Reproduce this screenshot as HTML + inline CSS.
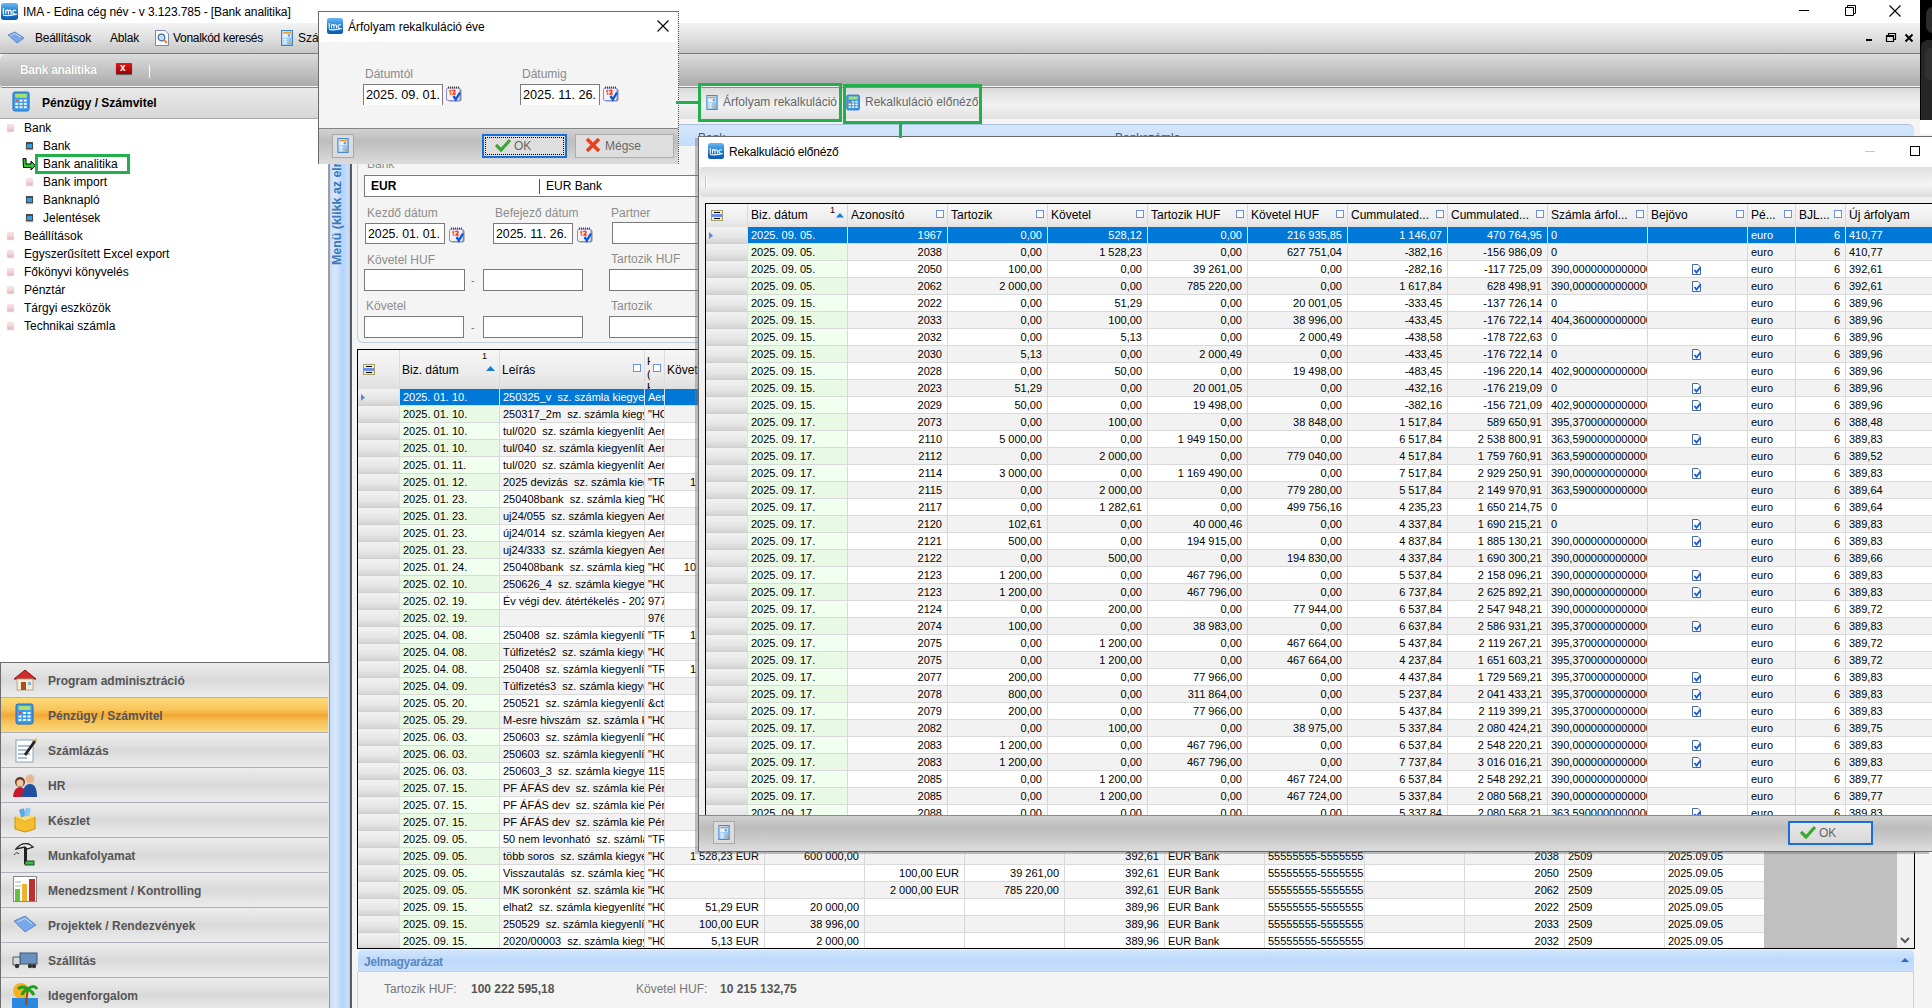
<!DOCTYPE html><html><head><meta charset="utf-8"><title>IMA</title><style>
*{box-sizing:border-box}
html,body{margin:0;padding:0}
body{width:1932px;height:1008px;overflow:hidden;position:relative;font-family:"Liberation Sans",sans-serif;font-size:11px;color:#000;background:#f4f4f4}
.a{position:absolute}
.t{position:absolute;white-space:nowrap;line-height:1}
.ico{position:absolute}
.gr{position:absolute;overflow:hidden}
.row{position:absolute;left:0;height:17px;white-space:nowrap}
.c{position:absolute;top:0;height:17px;line-height:17px;overflow:hidden;white-space:pre;border-right:1px solid #d9d9d9;border-bottom:1px solid #d9d9d9;padding:0 3px}
.c.r{text-align:right;padding-right:5px}
.ind{background:linear-gradient(#f2f2f2,#e6e6e6 60%,#d4d4d4);border-right:1px solid #e0e0e0;border-bottom:1px solid #cfcfcf}
.odd{background:#fff}
.even{background:#f2f2f2}
.gc.odd{background:#f0fff0}
.gc.even{background:#e8fae4}
.c.sel{background:#0078d7;color:#fff;border-right-color:#d4e4f4;border-bottom-color:#d9d9d9}
.hd{position:absolute;top:0;height:22px;line-height:22px;white-space:nowrap;overflow:hidden;padding:0 3px;font-size:12px;border-right:1px solid #d9d9d9;background:linear-gradient(#f7f7f7,#ebebeb 70%,#dedede)}
.fb{position:absolute;width:8px;height:8px;border:1px solid #6d8fe6;background:#fff}
.lbl{position:absolute;white-space:nowrap;color:#8c8c8c;font-size:12px;line-height:1}
.inp{position:absolute;background:#fff;border:1px solid #7a7a7a}
</style></head><body>
<div class="a" style="left:0;top:0;width:1920px;height:23px;background:#fff"></div>
<svg class="ico" style="left:1px;top:3px" width="17" height="17" viewBox="0 0 16 16"><defs><linearGradient id="ig1" x1="0" y1="0" x2="0" y2="1"><stop offset="0" stop-color="#6ab8f0"/><stop offset="0.55" stop-color="#1a7ad0"/><stop offset="1" stop-color="#0a5ab0"/></linearGradient></defs><rect x="0" y="0" width="16" height="16" rx="2.5" fill="url(#ig1)"/><path d="M2.2 5 V10.5 M4.5 10.5 V7 Q6 6 7 7.5 V10.5 M7 7.5 Q8.5 6 9.5 7.5 V10.5 M14 7.2 Q12 6 11 8 Q11 10.5 13 10.3 M2 11.5 Q8 12.5 15 10.5" stroke="#fff" stroke-width="1.1" fill="none"/></svg>
<div class="t" style="left:23px;top:6px;font-size:12px;color:#000;letter-spacing:-0.1px">IMA - Edina cég név - v 3.123.785 - [Bank analitika]</div>
<svg class="ico" style="left:1790px;top:0" width="130" height="22" viewBox="0 0 130 22"><path d="M9 10.5 H19" stroke="#000" stroke-width="1"/><path d="M55.5 7.5 H63.5 V15.5 H55.5 Z M57.5 7.5 V5.5 H65.5 V13.5 H63.5" stroke="#000" fill="none" stroke-width="1"/><path d="M99.5 5.5 L110.5 16.5 M110.5 5.5 L99.5 16.5" stroke="#000" stroke-width="1.1"/></svg>
<div class="a" style="left:1920px;top:0;width:12px;height:120px;background:#000;overflow:hidden"><div class="a" style="left:6px;top:7px;width:16px;height:26px;border-radius:7px;background:#2c2c2c"></div><div class="a" style="left:1px;top:40px;width:16px;height:90px;border-radius:7px;background:#262626"></div><div class="a" style="left:5px;top:48px;width:12px;height:32px;border-radius:6px;background:#323232"></div></div>
<div class="a" style="left:1920px;top:120px;width:12px;height:14px;background:#fff"></div>
<div class="a" style="left:0;top:23px;width:1920px;height:31px;background:linear-gradient(#f3f3f3,#e2e2e2 45%,#c6c6c6);border-bottom:1px solid #7c7c7c"></div>
<svg class="ico" style="left:7px;top:31px" width="18" height="14" viewBox="0 0 18 14"><path d="M1 4 L8 1 L17 7 L10 12 Z" fill="#7aa6e6" stroke="#4a7ec8" stroke-width="0.8"/><path d="M3 5 L8 2.5 L14 6.5" stroke="#c8dcf8" fill="none"/></svg>
<div class="t" style="left:35px;top:32px;font-size:12px;letter-spacing:-0.25px">Beállítások</div>
<div class="t" style="left:110px;top:32px;font-size:12px;letter-spacing:-0.2px">Ablak</div>
<svg class="ico" style="left:155px;top:30px" width="15" height="16" viewBox="0 0 15 16"><path d="M0.5 0.5 H10 L13.5 4 V15.5 H0.5 Z" fill="#fafcff" stroke="#7a8aa8"/><circle cx="6.5" cy="7.5" r="3.3" fill="#bfe0ff" stroke="#4a6a98" stroke-width="1.2"/><path d="M9 10 L12 13" stroke="#e88a30" stroke-width="2"/></svg>
<div class="t" style="left:173px;top:32px;font-size:12px;letter-spacing:-0.3px">Vonalkód keresés</div>
<svg class="ico" style="left:281px;top:30px" width="12" height="16" viewBox="0 0 12 16"><defs><linearGradient id="fg" x1="0" y1="0" x2="1" y2="1"><stop offset="0" stop-color="#cfe6fb"/><stop offset="1" stop-color="#7eb6ea"/></linearGradient></defs><rect x="0.5" y="0.5" width="11" height="15" fill="url(#fg)" stroke="#3f86d0"/><rect x="2" y="2" width="8" height="1.5" fill="#f5a030"/><rect x="2" y="4" width="8" height="3.5" fill="#e8f4ff"/><circle cx="8" cy="5.5" r="1.3" fill="#6a9ad8"/><path d="M2 9.5 H6 M2 11.5 H6 M2 13.5 H6 M4 9 V14" stroke="#e8f4ff" stroke-width="0.9"/><rect x="8" y="11.5" width="2" height="2.5" fill="#f5a030"/></svg>
<div class="t" style="left:298px;top:32px;font-size:12px">Szám</div>
<svg class="ico" style="left:1860px;top:30px" width="60" height="16" viewBox="0 0 60 16"><rect x="6" y="9" width="6" height="2" fill="#000"/><path d="M26.5 5.5 H33.5 V11.5 H26.5 Z M28.5 5.5 V3.5 H35.5 V9.5 H33.5" stroke="#000" stroke-width="1.2" fill="none"/><rect x="26" y="5" width="8" height="2" fill="#000"/><path d="M45.5 4.5 L52.5 11.5 M52.5 4.5 L45.5 11.5" stroke="#000" stroke-width="2"/></svg>
<div class="a" style="left:0;top:54px;width:1920px;height:34px;background:linear-gradient(#dcdcdc,#c2c2c2 50%,#a9a9a9);border-top-left-radius:6px;border-bottom-left-radius:3px;border-bottom:1px solid #8a8a8a;box-shadow:inset 0 -1px 0 #f4f4f4"></div>
<div class="t" style="left:20px;top:64px;font-size:12px;font-weight:bold;color:#fff;letter-spacing:-0.3px;text-shadow:0 0 1px #888">Bank analitika</div>
<div class="a" style="left:116px;top:63px;width:16px;height:11px;background:linear-gradient(#e01818,#a00000);border-radius:1px;box-shadow:0 1px 1px #555"><div class="t" style="left:4px;top:0px;color:#fff;font-size:10px;font-weight:bold">x</div></div>
<div class="a" style="left:149px;top:65px;width:1px;height:13px;background:#fff"></div>
<div class="a" style="left:0;top:88px;width:329px;height:575px;background:#fff;border-right:1px solid #a0a0a0"></div>
<div class="a" style="left:0;top:88px;width:329px;height:31px;background:linear-gradient(#e9e9e9,#e0e0e0 50%,#d8d8d8);border-bottom:1px solid #a8a8a8"></div>
<svg class="ico" style="left:12px;top:91px" width="19" height="21" viewBox="0 0 20 22"><rect x="1" y="1" width="17" height="20" rx="2" fill="#3d9be8" stroke="#1c6ec0"/><rect x="3.5" y="3" width="12" height="4" fill="#a8e070"/><g fill="#fff"><rect x="3.5" y="9" width="3" height="2"/><rect x="8" y="9" width="3" height="2"/><rect x="12.5" y="9" width="3" height="2"/><rect x="3.5" y="12.5" width="3" height="2"/><rect x="8" y="12.5" width="3" height="2"/><rect x="12.5" y="12.5" width="3" height="2"/><rect x="3.5" y="16" width="3" height="2"/><rect x="8" y="16" width="3" height="2"/><rect x="12.5" y="16" width="3" height="2"/></g><rect x="3.5" y="9" width="3" height="2" fill="#e04030"/></svg>
<div class="t" style="left:42px;top:97px;font-size:12px;font-weight:bold">Pénzügy / Számvitel</div>
<div class="a" style="left:7px;top:124px;width:7px;height:7px;border-radius:1px;background:linear-gradient(#f6e4e6,#f0d4d8 60%,#e4b8bd);box-shadow:0 1px 1px rgba(200,140,150,0.5)"></div>
<div class="t" style="left:24px;top:122px;font-size:12px">Bank</div>
<div class="a" style="left:26px;top:142px;width:7px;height:7px;background:#2aa0f0;border:1px solid #4a4a4a;border-width:2px 1px 1px 1px;box-shadow:0 1px 1px rgba(0,0,0,0.35)"></div>
<div class="t" style="left:43px;top:140px;font-size:12px">Bank</div>
<svg class="ico" style="left:22px;top:158px" width="14" height="13" viewBox="0 0 14 13"><path d="M1 0.5 H4 V6 H9 V3 L13.5 7.5 L9 12 V9.5 H1.5 Z" fill="#22d422" stroke="#000" stroke-width="1"/></svg>
<div class="t" style="left:43px;top:158px;font-size:12px">Bank analitika</div>
<div class="a" style="left:26px;top:178px;width:7px;height:7px;border-radius:1px;background:linear-gradient(#f6e4e6,#f0d4d8 60%,#e4b8bd);box-shadow:0 1px 1px rgba(200,140,150,0.5)"></div>
<div class="t" style="left:43px;top:176px;font-size:12px">Bank import</div>
<div class="a" style="left:26px;top:196px;width:7px;height:7px;background:#2aa0f0;border:1px solid #4a4a4a;border-width:2px 1px 1px 1px;box-shadow:0 1px 1px rgba(0,0,0,0.35)"></div>
<div class="t" style="left:43px;top:194px;font-size:12px">Banknapló</div>
<div class="a" style="left:26px;top:214px;width:7px;height:7px;background:#2aa0f0;border:1px solid #4a4a4a;border-width:2px 1px 1px 1px;box-shadow:0 1px 1px rgba(0,0,0,0.35)"></div>
<div class="t" style="left:43px;top:212px;font-size:12px">Jelentések</div>
<div class="a" style="left:7px;top:232px;width:7px;height:7px;border-radius:1px;background:linear-gradient(#f6e4e6,#f0d4d8 60%,#e4b8bd);box-shadow:0 1px 1px rgba(200,140,150,0.5)"></div>
<div class="t" style="left:24px;top:230px;font-size:12px">Beállítások</div>
<div class="a" style="left:7px;top:250px;width:7px;height:7px;border-radius:1px;background:linear-gradient(#f6e4e6,#f0d4d8 60%,#e4b8bd);box-shadow:0 1px 1px rgba(200,140,150,0.5)"></div>
<div class="t" style="left:24px;top:248px;font-size:12px">Egyszerűsített Excel export</div>
<div class="a" style="left:7px;top:268px;width:7px;height:7px;border-radius:1px;background:linear-gradient(#f6e4e6,#f0d4d8 60%,#e4b8bd);box-shadow:0 1px 1px rgba(200,140,150,0.5)"></div>
<div class="t" style="left:24px;top:266px;font-size:12px">Főkönyvi könyvelés</div>
<div class="a" style="left:7px;top:286px;width:7px;height:7px;border-radius:1px;background:linear-gradient(#f6e4e6,#f0d4d8 60%,#e4b8bd);box-shadow:0 1px 1px rgba(200,140,150,0.5)"></div>
<div class="t" style="left:24px;top:284px;font-size:12px">Pénztár</div>
<div class="a" style="left:7px;top:304px;width:7px;height:7px;border-radius:1px;background:linear-gradient(#f6e4e6,#f0d4d8 60%,#e4b8bd);box-shadow:0 1px 1px rgba(200,140,150,0.5)"></div>
<div class="t" style="left:24px;top:302px;font-size:12px">Tárgyi eszközök</div>
<div class="a" style="left:7px;top:322px;width:7px;height:7px;border-radius:1px;background:linear-gradient(#f6e4e6,#f0d4d8 60%,#e4b8bd);box-shadow:0 1px 1px rgba(200,140,150,0.5)"></div>
<div class="t" style="left:24px;top:320px;font-size:12px">Technikai számla</div>
<div class="a" style="left:35px;top:154px;width:95px;height:20px;border:3px solid #21b04b"></div>
<div class="a" style="left:0;top:662px;width:330px;height:346px;background:#e4e4e4;border:1px solid #6e6e6e;border-bottom:none"></div>
<div class="a" style="left:1px;top:663px;width:327px;height:35px;background:linear-gradient(#ececec,#e2e2e2 30%,#d9d9d9 50%,#e3e3e3 75%,#ebebeb);border-bottom:1px solid #b0b0bc"></div>
<div class="t" style="left:48px;top:675px;font-size:12px;font-weight:bold;color:#555">Program adminisztráció</div>
<div class="a" style="left:1px;top:698px;width:327px;height:35px;background:linear-gradient(#fcdb7a,#f8c458 35%,#f3a733 50%,#f7c25a 70%,#fcda7c);border-bottom:1px solid #b0b0bc"></div>
<div class="t" style="left:48px;top:710px;font-size:12px;font-weight:bold;color:#555">Pénzügy / Számvitel</div>
<div class="a" style="left:1px;top:733px;width:327px;height:35px;background:linear-gradient(#ececec,#e2e2e2 30%,#d9d9d9 50%,#e3e3e3 75%,#ebebeb);border-bottom:1px solid #b0b0bc"></div>
<div class="t" style="left:48px;top:745px;font-size:12px;font-weight:bold;color:#555">Számlázás</div>
<div class="a" style="left:1px;top:768px;width:327px;height:35px;background:linear-gradient(#ececec,#e2e2e2 30%,#d9d9d9 50%,#e3e3e3 75%,#ebebeb);border-bottom:1px solid #b0b0bc"></div>
<div class="t" style="left:48px;top:780px;font-size:12px;font-weight:bold;color:#555">HR</div>
<div class="a" style="left:1px;top:803px;width:327px;height:35px;background:linear-gradient(#ececec,#e2e2e2 30%,#d9d9d9 50%,#e3e3e3 75%,#ebebeb);border-bottom:1px solid #b0b0bc"></div>
<div class="t" style="left:48px;top:815px;font-size:12px;font-weight:bold;color:#555">Készlet</div>
<div class="a" style="left:1px;top:838px;width:327px;height:35px;background:linear-gradient(#ececec,#e2e2e2 30%,#d9d9d9 50%,#e3e3e3 75%,#ebebeb);border-bottom:1px solid #b0b0bc"></div>
<div class="t" style="left:48px;top:850px;font-size:12px;font-weight:bold;color:#555">Munkafolyamat</div>
<div class="a" style="left:1px;top:873px;width:327px;height:35px;background:linear-gradient(#ececec,#e2e2e2 30%,#d9d9d9 50%,#e3e3e3 75%,#ebebeb);border-bottom:1px solid #b0b0bc"></div>
<div class="t" style="left:48px;top:885px;font-size:12px;font-weight:bold;color:#555">Menedzsment / Kontrolling</div>
<div class="a" style="left:1px;top:908px;width:327px;height:35px;background:linear-gradient(#ececec,#e2e2e2 30%,#d9d9d9 50%,#e3e3e3 75%,#ebebeb);border-bottom:1px solid #b0b0bc"></div>
<div class="t" style="left:48px;top:920px;font-size:12px;font-weight:bold;color:#555">Projektek / Rendezvények</div>
<div class="a" style="left:1px;top:943px;width:327px;height:35px;background:linear-gradient(#ececec,#e2e2e2 30%,#d9d9d9 50%,#e3e3e3 75%,#ebebeb);border-bottom:1px solid #b0b0bc"></div>
<div class="t" style="left:48px;top:955px;font-size:12px;font-weight:bold;color:#555">Szállítás</div>
<div class="a" style="left:1px;top:978px;width:327px;height:35px;background:linear-gradient(#ececec,#e2e2e2 30%,#d9d9d9 50%,#e3e3e3 75%,#ebebeb);border-bottom:1px solid #b0b0bc"></div>
<div class="t" style="left:48px;top:990px;font-size:12px;font-weight:bold;color:#555">Idegenforgalom</div>
<svg class="ico" style="left:12px;top:668px" width="26" height="24" viewBox="0 0 26 24"><path d="M2 11 L13 2 L24 11 Z" fill="#d42a2a" stroke="#8a1010"/><rect x="5" y="11" width="16" height="11" fill="#f4ead8" stroke="#b8a888"/><rect x="9" y="14" width="5" height="8" fill="#a85018"/><rect x="16" y="14" width="3" height="3" fill="#8ab0d8"/></svg>
<div style="position:absolute;left:15px;top:703px"><svg class="ico" style="left:0px;top:0px" width="20" height="22" viewBox="0 0 20 22"><rect x="1" y="1" width="17" height="20" rx="2" fill="#3d9be8" stroke="#1c6ec0"/><rect x="3.5" y="3" width="12" height="4" fill="#a8e070"/><g fill="#fff"><rect x="3.5" y="9" width="3" height="2"/><rect x="8" y="9" width="3" height="2"/><rect x="12.5" y="9" width="3" height="2"/><rect x="3.5" y="12.5" width="3" height="2"/><rect x="8" y="12.5" width="3" height="2"/><rect x="12.5" y="12.5" width="3" height="2"/><rect x="3.5" y="16" width="3" height="2"/><rect x="8" y="16" width="3" height="2"/><rect x="12.5" y="16" width="3" height="2"/></g><rect x="3.5" y="9" width="3" height="2" fill="#e04030"/></svg></div>
<svg class="ico" style="left:15px;top:737px" width="22" height="26" viewBox="0 0 22 26"><rect x="1" y="3" width="17" height="22" fill="#fff" stroke="#8aa0c0"/><g stroke="#5a78b0" stroke-width="1"><path d="M3 9H15M3 13H15M3 17H15M3 21H12"/></g><path d="M9 17 L19 3 L21 5 L11 19 Z" fill="#222"/><path d="M19 3 L21 1 L22 3 L21 5Z" fill="#e8b020"/></svg>
<svg class="ico" style="left:12px;top:772px" width="26" height="26" viewBox="0 0 26 26"><circle cx="8" cy="10" r="5" fill="#6a3a20"/><path d="M1 25 Q2 15 8 15 Q14 15 15 25Z" fill="#c81830"/><circle cx="18" cy="7" r="4.5" fill="#e8b890"/><path d="M10 25 Q11 12 18 12 Q25 12 25 25Z" fill="#2050a0"/><circle cx="8" cy="11" r="3.5" fill="#f0c8a0"/></svg>
<svg class="ico" style="left:13px;top:807px" width="24" height="26" viewBox="0 0 24 26"><path d="M2 10 L12 14 L22 10 L22 22 L12 25 L2 22Z" fill="#f4c030" stroke="#c89010"/><path d="M2 10 L12 6 L22 10 L12 14Z" fill="#fbe070"/><rect x="7" y="2" width="5" height="8" fill="#5aa8e8" transform="rotate(-15 9 6)"/><rect x="12" y="1" width="5" height="8" fill="#8ac8f0" transform="rotate(10 14 5)"/></svg>
<svg class="ico" style="left:13px;top:841px" width="24" height="28" viewBox="0 0 24 28"><path d="M3 8 Q8 1 16 3 L20 6 L14 8 L12 6 Z" fill="#eee" stroke="#222" stroke-width="1.3"/><rect x="11" y="7" width="3" height="16" fill="#222"/><rect x="12" y="20" width="9" height="4" fill="#30c040" stroke="#222" stroke-width="0.8"/><path d="M1 14 Q4 10 6 13" stroke="#333" fill="none"/></svg>
<svg class="ico" style="left:13px;top:876px" width="24" height="26" viewBox="0 0 24 26"><rect x="0.5" y="0.5" width="23" height="25" fill="#fff" stroke="#888"/><rect x="2" y="13" width="5" height="12" fill="#60c040"/><rect x="9" y="8" width="5" height="17" fill="#f0b030"/><rect x="16" y="3" width="6" height="22" fill="#c03030"/><path d="M2 6 H8 M2 10 H8" stroke="#aaa"/></svg>
<svg class="ico" style="left:13px;top:914px" width="24" height="20" viewBox="0 0 24 20"><path d="M1 7 L12 2 L23 11 L12 18 Z" fill="#78a8ea" stroke="#5080c8" stroke-width="0.8"/><path d="M4 8 L12 4.5 L19 10" stroke="#c8dcf8" fill="none"/></svg>
<svg class="ico" style="left:12px;top:951px" width="26" height="18" viewBox="0 0 26 18"><rect x="8" y="2" width="17" height="11" fill="#6a90c0" stroke="#405878"/><path d="M1 6 L8 6 L8 14 L1 14 Z" fill="#d0d8e0" stroke="#505860"/><circle cx="5" cy="15" r="2.2" fill="#333"/><circle cx="18" cy="15" r="2.2" fill="#333"/><circle cx="22" cy="15" r="2.2" fill="#333"/></svg>
<svg class="ico" style="left:12px;top:981px" width="26" height="28" viewBox="0 0 26 28"><circle cx="9" cy="10" r="8" fill="#f8b020"/><rect x="0" y="17" width="26" height="11" fill="#2a88e0"/><path d="M14 24 Q15 12 16 8" stroke="#8a5020" stroke-width="2" fill="none"/><path d="M16 8 Q10 4 6 8 M16 8 Q22 3 25 8 M16 8 Q20 10 22 14 M16 8 Q11 10 10 14" stroke="#20a020" stroke-width="3" fill="none"/></svg>
<div class="a" style="left:329px;top:88px;width:21px;height:920px;background:linear-gradient(90deg,#c4dcfa,#d8e8fc 25%,#c8dffc 45%,#b6d4fc 60%,#c6defc 90%,#b8c8dc);border-left:1px solid #9a9a9a"></div>
<div class="t" style="left:331px;top:265px;font-size:12.4px;font-weight:bold;color:#3a78b8;transform:rotate(-90deg);transform-origin:0 0">Menü (klikk az elrejtéshez)</div>
<div class="a" style="left:350px;top:88px;width:2px;height:920px;background:#5a5a5a"></div>
<div class="a" style="left:352px;top:88px;width:1568px;height:920px;background:#f4f4f4"></div>
<div class="a" style="left:352px;top:88px;width:1568px;height:31px;background:linear-gradient(#dadada,#eeeeee 45%,#f2f2f2 55%,#e0e0e0)"></div>
<svg class="ico" style="left:706px;top:95px" width="12" height="15" viewBox="0 0 12 16"><defs><linearGradient id="fg" x1="0" y1="0" x2="1" y2="1"><stop offset="0" stop-color="#cfe6fb"/><stop offset="1" stop-color="#7eb6ea"/></linearGradient></defs><rect x="0.5" y="0.5" width="11" height="15" fill="url(#fg)" stroke="#3f86d0"/><rect x="2" y="2" width="8" height="1.5" fill="#f5a030"/><rect x="2" y="4" width="8" height="3.5" fill="#e8f4ff"/><circle cx="8" cy="5.5" r="1.3" fill="#6a9ad8"/><path d="M2 9.5 H6 M2 11.5 H6 M2 13.5 H6 M4 9 V14" stroke="#e8f4ff" stroke-width="0.9"/><rect x="8" y="11.5" width="2" height="2.5" fill="#f5a030"/></svg>
<div class="t" style="left:723px;top:96px;font-size:12px;color:#666">Árfolyam rekalkuláció</div>
<svg class="ico" style="left:846px;top:94px" width="15" height="17" viewBox="0 0 20 22"><rect x="1" y="1" width="17" height="20" rx="2" fill="#3d9be8" stroke="#1c6ec0"/><rect x="3.5" y="3" width="12" height="4" fill="#a8e070"/><g fill="#fff"><rect x="3.5" y="9" width="3" height="2"/><rect x="8" y="9" width="3" height="2"/><rect x="12.5" y="9" width="3" height="2"/><rect x="3.5" y="12.5" width="3" height="2"/><rect x="8" y="12.5" width="3" height="2"/><rect x="12.5" y="12.5" width="3" height="2"/><rect x="3.5" y="16" width="3" height="2"/><rect x="8" y="16" width="3" height="2"/><rect x="12.5" y="16" width="3" height="2"/></g><rect x="3.5" y="9" width="3" height="2" fill="#e04030"/></svg>
<div class="t" style="left:865px;top:96px;font-size:12px;color:#666">Rekalkuláció előnéző</div>
<div class="a" style="left:357px;top:124px;width:1557px;height:22px;background:linear-gradient(#d4e6fc,#c4dcfa);border-top:1px solid #a8c0dc;border-top-right-radius:6px"></div>
<div class="t" style="left:698px;top:132px;font-size:12px;color:#555">Bank</div>
<div class="t" style="left:1115px;top:132px;font-size:12px;color:#555">Bankszámla</div>
<div class="a" style="left:357px;top:146px;width:1557px;height:197px;border:1px solid #c0d0e4;border-top:none;border-radius:0 0 6px 6px;background:#f4f4f4"></div>
<div class="lbl" style="left:367px;top:158px">Bank</div>
<div class="inp" style="left:364px;top:175px;width:540px;height:22px"><div class="a" style="left:174px;top:3px;width:1px;height:15px;background:#555"></div><div class="t" style="left:6px;top:4px;font-size:12px;font-weight:bold">EUR</div><div class="t" style="left:181px;top:4px;font-size:12px">EUR Bank</div></div>
<div class="lbl" style="left:367px;top:207px">Kezdő dátum</div>
<div class="inp" style="left:365px;top:223px;width:80px;height:21px"><div class="t" style="left:2px;top:4px;font-size:12.3px">2025. 01. 01.</div></div>
<svg class="ico" style="left:449px;top:227px" width="16" height="16" viewBox="0 0 16 16"><rect x="1.5" y="2.5" width="14" height="13" rx="2" fill="#666" opacity="0.75"/><rect x="0.5" y="2" width="13.5" height="12.5" rx="1.5" fill="#f2f2ff" stroke="#8c8cd0"/><path d="M2 1.5 H13" stroke="#444" stroke-width="2" stroke-dasharray="1 1"/><path d="M3 5.5 L4.5 4.5 V9" stroke="#ff7010" stroke-width="1.5" fill="none"/><path d="M6.3 5 Q8 3.3 9.2 5 L7 8 H9.8" stroke="#ff3010" stroke-width="1.3" fill="none"/><path d="M7.5 10 L9.8 13.5 L14 6.5" stroke="#0a5ad8" stroke-width="2.4" fill="none"/></svg>
<div class="lbl" style="left:495px;top:207px">Befejező dátum</div>
<div class="inp" style="left:493px;top:223px;width:80px;height:21px"><div class="t" style="left:2px;top:4px;font-size:12.3px">2025. 11. 26.</div></div>
<svg class="ico" style="left:577px;top:227px" width="16" height="16" viewBox="0 0 16 16"><rect x="1.5" y="2.5" width="14" height="13" rx="2" fill="#666" opacity="0.75"/><rect x="0.5" y="2" width="13.5" height="12.5" rx="1.5" fill="#f2f2ff" stroke="#8c8cd0"/><path d="M2 1.5 H13" stroke="#444" stroke-width="2" stroke-dasharray="1 1"/><path d="M3 5.5 L4.5 4.5 V9" stroke="#ff7010" stroke-width="1.5" fill="none"/><path d="M6.3 5 Q8 3.3 9.2 5 L7 8 H9.8" stroke="#ff3010" stroke-width="1.3" fill="none"/><path d="M7.5 10 L9.8 13.5 L14 6.5" stroke="#0a5ad8" stroke-width="2.4" fill="none"/></svg>
<div class="lbl" style="left:611px;top:207px">Partner</div>
<div class="inp" style="left:612px;top:222px;width:200px;height:22px"></div>
<div class="lbl" style="left:367px;top:254px">Követel HUF</div>
<div class="inp" style="left:364px;top:269px;width:101px;height:22px"></div>
<div class="t" style="left:471px;top:275px;color:#777;font-size:11px">-</div>
<div class="inp" style="left:483px;top:269px;width:100px;height:22px"></div>
<div class="lbl" style="left:611px;top:253px">Tartozik HUF</div>
<div class="inp" style="left:609px;top:269px;width:200px;height:22px"></div>
<div class="lbl" style="left:366px;top:300px">Követel</div>
<div class="inp" style="left:364px;top:316px;width:100px;height:22px"></div>
<div class="t" style="left:471px;top:322px;color:#777;font-size:11px">-</div>
<div class="inp" style="left:483px;top:316px;width:100px;height:22px"></div>
<div class="lbl" style="left:611px;top:300px">Tartozik</div>
<div class="inp" style="left:609px;top:316px;width:200px;height:22px"></div>
<div class="gr" style="left:357px;top:349px;width:1558px;height:600px;border:1px solid #000;background:#fff">
<div class="a" style="left:0;top:0;width:1556px;height:39px;background:linear-gradient(#f6f6f6,#ececec 60%,#dedede)"></div>
<div class="a" style="left:41px;top:0;width:1px;height:39px;background:#dcdcdc"></div>
<div class="a" style="left:141px;top:0;width:1px;height:39px;background:#dcdcdc"></div>
<div class="a" style="left:286px;top:0;width:1px;height:39px;background:#dcdcdc"></div>
<div class="a" style="left:306px;top:0;width:1px;height:39px;background:#dcdcdc"></div>
<div class="a" style="left:406px;top:0;width:1px;height:39px;background:#dcdcdc"></div>
<div class="a" style="left:506px;top:0;width:1px;height:39px;background:#dcdcdc"></div>
<div class="a" style="left:606px;top:0;width:1px;height:39px;background:#dcdcdc"></div>
<div class="a" style="left:706px;top:0;width:1px;height:39px;background:#dcdcdc"></div>
<div class="a" style="left:806px;top:0;width:1px;height:39px;background:#dcdcdc"></div>
<div class="a" style="left:906px;top:0;width:1px;height:39px;background:#dcdcdc"></div>
<div class="a" style="left:1006px;top:0;width:1px;height:39px;background:#dcdcdc"></div>
<div class="a" style="left:1106px;top:0;width:1px;height:39px;background:#dcdcdc"></div>
<div class="a" style="left:1206px;top:0;width:1px;height:39px;background:#dcdcdc"></div>
<div class="a" style="left:1306px;top:0;width:1px;height:39px;background:#dcdcdc"></div>
<div class="a" style="left:1406px;top:0;width:1px;height:39px;background:#dcdcdc"></div>
<svg class="ico" style="left:5px;top:14px" width="12" height="11" viewBox="0 0 12 11"><rect x="0.5" y="0.5" width="11" height="10" fill="#fbf59a" stroke="#a09a70"/><rect x="1" y="4" width="10" height="3" fill="#6d8ff0"/><path d="M3 2.5H9 M3 8.5H9" stroke="#000" stroke-width="1"/></svg>
<div class="t" style="left:44px;top:14px;font-size:12px">Biz. dátum</div>
<div class="t" style="left:124px;top:2px;font-size:9px">1</div>
<svg class="ico" style="left:128px;top:16px" width="9" height="5" viewBox="0 0 9 5"><path d="M0 5 L4.5 0 L9 5Z" fill="#1a7ad0"/></svg>
<div class="t" style="left:144px;top:14px;font-size:12px">Leírás</div>
<div class="fb" style="left:275px;top:14px"></div>
<div class="t" style="left:289px;top:5px;font-size:11px;line-height:13px;white-space:normal;width:3px;height:36px;overflow:hidden">H<br>(<br>H</div>
<div class="fb" style="left:295px;top:14px"></div>
<div class="t" style="left:309px;top:14px;font-size:12px">Követel</div>
<div class="row" style="top:39px;width:1556px">
<div class="c ind" style="left:0px;width:42px"></div>
<div class="c gc odd sel" style="left:42px;width:100px">2025. 01. 10.</div>
<div class="c odd sel" style="left:142px;width:145px">250325_v  sz. számla kiegyenlítés</div>
<div class="c odd sel" style="left:287px;width:20px">Aer</div>
<div class="c odd sel r" style="left:307px;width:100px"></div>
<div class="c odd r" style="left:407px;width:100px"></div>
<div class="c odd r" style="left:507px;width:100px"></div>
<div class="c odd r" style="left:607px;width:100px"></div>
<div class="c odd r" style="left:707px;width:100px"></div>
<div class="c odd" style="left:807px;width:100px"></div>
<div class="c odd" style="left:907px;width:100px"></div>
<div class="c odd" style="left:1007px;width:100px"></div>
<div class="c odd r" style="left:1107px;width:100px"></div>
<div class="c odd" style="left:1207px;width:100px"></div>
<div class="c odd" style="left:1307px;width:100px"></div>
<div class="c" style="left:1406px;width:133px;background:#c0c0c0;border:none"></div>
</div>
<div class="row" style="top:56px;width:1556px">
<div class="c ind" style="left:0px;width:42px"></div>
<div class="c gc even" style="left:42px;width:100px">2025. 01. 10.</div>
<div class="c even" style="left:142px;width:145px">250317_2m  sz. számla kiegyenlítés</div>
<div class="c even" style="left:287px;width:20px">"HC</div>
<div class="c even r" style="left:307px;width:100px"></div>
<div class="c even r" style="left:407px;width:100px"></div>
<div class="c even r" style="left:507px;width:100px"></div>
<div class="c even r" style="left:607px;width:100px"></div>
<div class="c even r" style="left:707px;width:100px"></div>
<div class="c even" style="left:807px;width:100px"></div>
<div class="c even" style="left:907px;width:100px"></div>
<div class="c even" style="left:1007px;width:100px"></div>
<div class="c even r" style="left:1107px;width:100px"></div>
<div class="c even" style="left:1207px;width:100px"></div>
<div class="c even" style="left:1307px;width:100px"></div>
<div class="c" style="left:1406px;width:133px;background:#c0c0c0;border:none"></div>
</div>
<div class="row" style="top:73px;width:1556px">
<div class="c ind" style="left:0px;width:42px"></div>
<div class="c gc odd" style="left:42px;width:100px">2025. 01. 10.</div>
<div class="c odd" style="left:142px;width:145px">tul/020  sz. számla kiegyenlítés</div>
<div class="c odd" style="left:287px;width:20px">Aer</div>
<div class="c odd r" style="left:307px;width:100px"></div>
<div class="c odd r" style="left:407px;width:100px"></div>
<div class="c odd r" style="left:507px;width:100px"></div>
<div class="c odd r" style="left:607px;width:100px"></div>
<div class="c odd r" style="left:707px;width:100px"></div>
<div class="c odd" style="left:807px;width:100px"></div>
<div class="c odd" style="left:907px;width:100px"></div>
<div class="c odd" style="left:1007px;width:100px"></div>
<div class="c odd r" style="left:1107px;width:100px"></div>
<div class="c odd" style="left:1207px;width:100px"></div>
<div class="c odd" style="left:1307px;width:100px"></div>
<div class="c" style="left:1406px;width:133px;background:#c0c0c0;border:none"></div>
</div>
<div class="row" style="top:90px;width:1556px">
<div class="c ind" style="left:0px;width:42px"></div>
<div class="c gc even" style="left:42px;width:100px">2025. 01. 10.</div>
<div class="c even" style="left:142px;width:145px">tul/040  sz. számla kiegyenlítés</div>
<div class="c even" style="left:287px;width:20px">Aer</div>
<div class="c even r" style="left:307px;width:100px"></div>
<div class="c even r" style="left:407px;width:100px"></div>
<div class="c even r" style="left:507px;width:100px"></div>
<div class="c even r" style="left:607px;width:100px"></div>
<div class="c even r" style="left:707px;width:100px"></div>
<div class="c even" style="left:807px;width:100px"></div>
<div class="c even" style="left:907px;width:100px"></div>
<div class="c even" style="left:1007px;width:100px"></div>
<div class="c even r" style="left:1107px;width:100px"></div>
<div class="c even" style="left:1207px;width:100px"></div>
<div class="c even" style="left:1307px;width:100px"></div>
<div class="c" style="left:1406px;width:133px;background:#c0c0c0;border:none"></div>
</div>
<div class="row" style="top:107px;width:1556px">
<div class="c ind" style="left:0px;width:42px"></div>
<div class="c gc odd" style="left:42px;width:100px">2025. 01. 11.</div>
<div class="c odd" style="left:142px;width:145px">tul/020  sz. számla kiegyenlítés</div>
<div class="c odd" style="left:287px;width:20px">Aer</div>
<div class="c odd r" style="left:307px;width:100px"></div>
<div class="c odd r" style="left:407px;width:100px"></div>
<div class="c odd r" style="left:507px;width:100px"></div>
<div class="c odd r" style="left:607px;width:100px"></div>
<div class="c odd r" style="left:707px;width:100px"></div>
<div class="c odd" style="left:807px;width:100px"></div>
<div class="c odd" style="left:907px;width:100px"></div>
<div class="c odd" style="left:1007px;width:100px"></div>
<div class="c odd r" style="left:1107px;width:100px"></div>
<div class="c odd" style="left:1207px;width:100px"></div>
<div class="c odd" style="left:1307px;width:100px"></div>
<div class="c" style="left:1406px;width:133px;background:#c0c0c0;border:none"></div>
</div>
<div class="row" style="top:124px;width:1556px">
<div class="c ind" style="left:0px;width:42px"></div>
<div class="c gc even" style="left:42px;width:100px">2025. 01. 12.</div>
<div class="c even" style="left:142px;width:145px">2025 devizás  sz. számla kiegyenlítés</div>
<div class="c even" style="left:287px;width:20px">"TR</div>
<div class="c even r" style="left:307px;width:100px">1 000,00 EUR</div>
<div class="c even r" style="left:407px;width:100px"></div>
<div class="c even r" style="left:507px;width:100px"></div>
<div class="c even r" style="left:607px;width:100px"></div>
<div class="c even r" style="left:707px;width:100px"></div>
<div class="c even" style="left:807px;width:100px"></div>
<div class="c even" style="left:907px;width:100px"></div>
<div class="c even" style="left:1007px;width:100px"></div>
<div class="c even r" style="left:1107px;width:100px"></div>
<div class="c even" style="left:1207px;width:100px"></div>
<div class="c even" style="left:1307px;width:100px"></div>
<div class="c" style="left:1406px;width:133px;background:#c0c0c0;border:none"></div>
</div>
<div class="row" style="top:141px;width:1556px">
<div class="c ind" style="left:0px;width:42px"></div>
<div class="c gc odd" style="left:42px;width:100px">2025. 01. 23.</div>
<div class="c odd" style="left:142px;width:145px">250408bank  sz. számla kiegyenlítés</div>
<div class="c odd" style="left:287px;width:20px">"HC</div>
<div class="c odd r" style="left:307px;width:100px"></div>
<div class="c odd r" style="left:407px;width:100px"></div>
<div class="c odd r" style="left:507px;width:100px"></div>
<div class="c odd r" style="left:607px;width:100px"></div>
<div class="c odd r" style="left:707px;width:100px"></div>
<div class="c odd" style="left:807px;width:100px"></div>
<div class="c odd" style="left:907px;width:100px"></div>
<div class="c odd" style="left:1007px;width:100px"></div>
<div class="c odd r" style="left:1107px;width:100px"></div>
<div class="c odd" style="left:1207px;width:100px"></div>
<div class="c odd" style="left:1307px;width:100px"></div>
<div class="c" style="left:1406px;width:133px;background:#c0c0c0;border:none"></div>
</div>
<div class="row" style="top:158px;width:1556px">
<div class="c ind" style="left:0px;width:42px"></div>
<div class="c gc even" style="left:42px;width:100px">2025. 01. 23.</div>
<div class="c even" style="left:142px;width:145px">uj24/055  sz. számla kiegyenlítés</div>
<div class="c even" style="left:287px;width:20px">Aer</div>
<div class="c even r" style="left:307px;width:100px"></div>
<div class="c even r" style="left:407px;width:100px"></div>
<div class="c even r" style="left:507px;width:100px"></div>
<div class="c even r" style="left:607px;width:100px"></div>
<div class="c even r" style="left:707px;width:100px"></div>
<div class="c even" style="left:807px;width:100px"></div>
<div class="c even" style="left:907px;width:100px"></div>
<div class="c even" style="left:1007px;width:100px"></div>
<div class="c even r" style="left:1107px;width:100px"></div>
<div class="c even" style="left:1207px;width:100px"></div>
<div class="c even" style="left:1307px;width:100px"></div>
<div class="c" style="left:1406px;width:133px;background:#c0c0c0;border:none"></div>
</div>
<div class="row" style="top:175px;width:1556px">
<div class="c ind" style="left:0px;width:42px"></div>
<div class="c gc odd" style="left:42px;width:100px">2025. 01. 23.</div>
<div class="c odd" style="left:142px;width:145px">új24/014  sz. számla kiegyenlítés</div>
<div class="c odd" style="left:287px;width:20px">Aer</div>
<div class="c odd r" style="left:307px;width:100px"></div>
<div class="c odd r" style="left:407px;width:100px"></div>
<div class="c odd r" style="left:507px;width:100px"></div>
<div class="c odd r" style="left:607px;width:100px"></div>
<div class="c odd r" style="left:707px;width:100px"></div>
<div class="c odd" style="left:807px;width:100px"></div>
<div class="c odd" style="left:907px;width:100px"></div>
<div class="c odd" style="left:1007px;width:100px"></div>
<div class="c odd r" style="left:1107px;width:100px"></div>
<div class="c odd" style="left:1207px;width:100px"></div>
<div class="c odd" style="left:1307px;width:100px"></div>
<div class="c" style="left:1406px;width:133px;background:#c0c0c0;border:none"></div>
</div>
<div class="row" style="top:192px;width:1556px">
<div class="c ind" style="left:0px;width:42px"></div>
<div class="c gc even" style="left:42px;width:100px">2025. 01. 23.</div>
<div class="c even" style="left:142px;width:145px">uj24/333  sz. számla kiegyenlítés</div>
<div class="c even" style="left:287px;width:20px">Aer</div>
<div class="c even r" style="left:307px;width:100px"></div>
<div class="c even r" style="left:407px;width:100px"></div>
<div class="c even r" style="left:507px;width:100px"></div>
<div class="c even r" style="left:607px;width:100px"></div>
<div class="c even r" style="left:707px;width:100px"></div>
<div class="c even" style="left:807px;width:100px"></div>
<div class="c even" style="left:907px;width:100px"></div>
<div class="c even" style="left:1007px;width:100px"></div>
<div class="c even r" style="left:1107px;width:100px"></div>
<div class="c even" style="left:1207px;width:100px"></div>
<div class="c even" style="left:1307px;width:100px"></div>
<div class="c" style="left:1406px;width:133px;background:#c0c0c0;border:none"></div>
</div>
<div class="row" style="top:209px;width:1556px">
<div class="c ind" style="left:0px;width:42px"></div>
<div class="c gc odd" style="left:42px;width:100px">2025. 01. 24.</div>
<div class="c odd" style="left:142px;width:145px">250408bank  sz. számla kiegyenlítés</div>
<div class="c odd" style="left:287px;width:20px">"HC</div>
<div class="c odd r" style="left:307px;width:100px">10 000,00 EUR</div>
<div class="c odd r" style="left:407px;width:100px"></div>
<div class="c odd r" style="left:507px;width:100px"></div>
<div class="c odd r" style="left:607px;width:100px"></div>
<div class="c odd r" style="left:707px;width:100px"></div>
<div class="c odd" style="left:807px;width:100px"></div>
<div class="c odd" style="left:907px;width:100px"></div>
<div class="c odd" style="left:1007px;width:100px"></div>
<div class="c odd r" style="left:1107px;width:100px"></div>
<div class="c odd" style="left:1207px;width:100px"></div>
<div class="c odd" style="left:1307px;width:100px"></div>
<div class="c" style="left:1406px;width:133px;background:#c0c0c0;border:none"></div>
</div>
<div class="row" style="top:226px;width:1556px">
<div class="c ind" style="left:0px;width:42px"></div>
<div class="c gc even" style="left:42px;width:100px">2025. 02. 10.</div>
<div class="c even" style="left:142px;width:145px">250626_4  sz. számla kiegyenlítés</div>
<div class="c even" style="left:287px;width:20px">"HC</div>
<div class="c even r" style="left:307px;width:100px"></div>
<div class="c even r" style="left:407px;width:100px"></div>
<div class="c even r" style="left:507px;width:100px"></div>
<div class="c even r" style="left:607px;width:100px"></div>
<div class="c even r" style="left:707px;width:100px"></div>
<div class="c even" style="left:807px;width:100px"></div>
<div class="c even" style="left:907px;width:100px"></div>
<div class="c even" style="left:1007px;width:100px"></div>
<div class="c even r" style="left:1107px;width:100px"></div>
<div class="c even" style="left:1207px;width:100px"></div>
<div class="c even" style="left:1307px;width:100px"></div>
<div class="c" style="left:1406px;width:133px;background:#c0c0c0;border:none"></div>
</div>
<div class="row" style="top:243px;width:1556px">
<div class="c ind" style="left:0px;width:42px"></div>
<div class="c gc odd" style="left:42px;width:100px">2025. 02. 19.</div>
<div class="c odd" style="left:142px;width:145px">Év végi dev. átértékelés - 2024</div>
<div class="c odd" style="left:287px;width:20px">977</div>
<div class="c odd r" style="left:307px;width:100px"></div>
<div class="c odd r" style="left:407px;width:100px"></div>
<div class="c odd r" style="left:507px;width:100px"></div>
<div class="c odd r" style="left:607px;width:100px"></div>
<div class="c odd r" style="left:707px;width:100px"></div>
<div class="c odd" style="left:807px;width:100px"></div>
<div class="c odd" style="left:907px;width:100px"></div>
<div class="c odd" style="left:1007px;width:100px"></div>
<div class="c odd r" style="left:1107px;width:100px"></div>
<div class="c odd" style="left:1207px;width:100px"></div>
<div class="c odd" style="left:1307px;width:100px"></div>
<div class="c" style="left:1406px;width:133px;background:#c0c0c0;border:none"></div>
</div>
<div class="row" style="top:260px;width:1556px">
<div class="c ind" style="left:0px;width:42px"></div>
<div class="c gc even" style="left:42px;width:100px">2025. 02. 19.</div>
<div class="c even" style="left:142px;width:145px"></div>
<div class="c even" style="left:287px;width:20px">976</div>
<div class="c even r" style="left:307px;width:100px"></div>
<div class="c even r" style="left:407px;width:100px"></div>
<div class="c even r" style="left:507px;width:100px"></div>
<div class="c even r" style="left:607px;width:100px"></div>
<div class="c even r" style="left:707px;width:100px"></div>
<div class="c even" style="left:807px;width:100px"></div>
<div class="c even" style="left:907px;width:100px"></div>
<div class="c even" style="left:1007px;width:100px"></div>
<div class="c even r" style="left:1107px;width:100px"></div>
<div class="c even" style="left:1207px;width:100px"></div>
<div class="c even" style="left:1307px;width:100px"></div>
<div class="c" style="left:1406px;width:133px;background:#c0c0c0;border:none"></div>
</div>
<div class="row" style="top:277px;width:1556px">
<div class="c ind" style="left:0px;width:42px"></div>
<div class="c gc odd" style="left:42px;width:100px">2025. 04. 08.</div>
<div class="c odd" style="left:142px;width:145px">250408  sz. számla kiegyenlítés</div>
<div class="c odd" style="left:287px;width:20px">"TR</div>
<div class="c odd r" style="left:307px;width:100px">1 000,00 EUR</div>
<div class="c odd r" style="left:407px;width:100px"></div>
<div class="c odd r" style="left:507px;width:100px"></div>
<div class="c odd r" style="left:607px;width:100px"></div>
<div class="c odd r" style="left:707px;width:100px"></div>
<div class="c odd" style="left:807px;width:100px"></div>
<div class="c odd" style="left:907px;width:100px"></div>
<div class="c odd" style="left:1007px;width:100px"></div>
<div class="c odd r" style="left:1107px;width:100px"></div>
<div class="c odd" style="left:1207px;width:100px"></div>
<div class="c odd" style="left:1307px;width:100px"></div>
<div class="c" style="left:1406px;width:133px;background:#c0c0c0;border:none"></div>
</div>
<div class="row" style="top:294px;width:1556px">
<div class="c ind" style="left:0px;width:42px"></div>
<div class="c gc even" style="left:42px;width:100px">2025. 04. 08.</div>
<div class="c even" style="left:142px;width:145px">Túlfizetés2  sz. számla kiegyenlítés</div>
<div class="c even" style="left:287px;width:20px">"HC</div>
<div class="c even r" style="left:307px;width:100px"></div>
<div class="c even r" style="left:407px;width:100px"></div>
<div class="c even r" style="left:507px;width:100px"></div>
<div class="c even r" style="left:607px;width:100px"></div>
<div class="c even r" style="left:707px;width:100px"></div>
<div class="c even" style="left:807px;width:100px"></div>
<div class="c even" style="left:907px;width:100px"></div>
<div class="c even" style="left:1007px;width:100px"></div>
<div class="c even r" style="left:1107px;width:100px"></div>
<div class="c even" style="left:1207px;width:100px"></div>
<div class="c even" style="left:1307px;width:100px"></div>
<div class="c" style="left:1406px;width:133px;background:#c0c0c0;border:none"></div>
</div>
<div class="row" style="top:311px;width:1556px">
<div class="c ind" style="left:0px;width:42px"></div>
<div class="c gc odd" style="left:42px;width:100px">2025. 04. 08.</div>
<div class="c odd" style="left:142px;width:145px">250408  sz. számla kiegyenlítés</div>
<div class="c odd" style="left:287px;width:20px">"TR</div>
<div class="c odd r" style="left:307px;width:100px">1 000,00 EUR</div>
<div class="c odd r" style="left:407px;width:100px"></div>
<div class="c odd r" style="left:507px;width:100px"></div>
<div class="c odd r" style="left:607px;width:100px"></div>
<div class="c odd r" style="left:707px;width:100px"></div>
<div class="c odd" style="left:807px;width:100px"></div>
<div class="c odd" style="left:907px;width:100px"></div>
<div class="c odd" style="left:1007px;width:100px"></div>
<div class="c odd r" style="left:1107px;width:100px"></div>
<div class="c odd" style="left:1207px;width:100px"></div>
<div class="c odd" style="left:1307px;width:100px"></div>
<div class="c" style="left:1406px;width:133px;background:#c0c0c0;border:none"></div>
</div>
<div class="row" style="top:328px;width:1556px">
<div class="c ind" style="left:0px;width:42px"></div>
<div class="c gc even" style="left:42px;width:100px">2025. 04. 09.</div>
<div class="c even" style="left:142px;width:145px">Túlfizetés3  sz. számla kiegyenlítés</div>
<div class="c even" style="left:287px;width:20px">"HC</div>
<div class="c even r" style="left:307px;width:100px"></div>
<div class="c even r" style="left:407px;width:100px"></div>
<div class="c even r" style="left:507px;width:100px"></div>
<div class="c even r" style="left:607px;width:100px"></div>
<div class="c even r" style="left:707px;width:100px"></div>
<div class="c even" style="left:807px;width:100px"></div>
<div class="c even" style="left:907px;width:100px"></div>
<div class="c even" style="left:1007px;width:100px"></div>
<div class="c even r" style="left:1107px;width:100px"></div>
<div class="c even" style="left:1207px;width:100px"></div>
<div class="c even" style="left:1307px;width:100px"></div>
<div class="c" style="left:1406px;width:133px;background:#c0c0c0;border:none"></div>
</div>
<div class="row" style="top:345px;width:1556px">
<div class="c ind" style="left:0px;width:42px"></div>
<div class="c gc odd" style="left:42px;width:100px">2025. 05. 20.</div>
<div class="c odd" style="left:142px;width:145px">250521  sz. számla kiegyenlítés</div>
<div class="c odd" style="left:287px;width:20px">&ct</div>
<div class="c odd r" style="left:307px;width:100px"></div>
<div class="c odd r" style="left:407px;width:100px"></div>
<div class="c odd r" style="left:507px;width:100px"></div>
<div class="c odd r" style="left:607px;width:100px"></div>
<div class="c odd r" style="left:707px;width:100px"></div>
<div class="c odd" style="left:807px;width:100px"></div>
<div class="c odd" style="left:907px;width:100px"></div>
<div class="c odd" style="left:1007px;width:100px"></div>
<div class="c odd r" style="left:1107px;width:100px"></div>
<div class="c odd" style="left:1207px;width:100px"></div>
<div class="c odd" style="left:1307px;width:100px"></div>
<div class="c" style="left:1406px;width:133px;background:#c0c0c0;border:none"></div>
</div>
<div class="row" style="top:362px;width:1556px">
<div class="c ind" style="left:0px;width:42px"></div>
<div class="c gc even" style="left:42px;width:100px">2025. 05. 29.</div>
<div class="c even" style="left:142px;width:145px">M-esre hivszám  sz. számla kiegyenlítés</div>
<div class="c even" style="left:287px;width:20px">"HC</div>
<div class="c even r" style="left:307px;width:100px"></div>
<div class="c even r" style="left:407px;width:100px"></div>
<div class="c even r" style="left:507px;width:100px"></div>
<div class="c even r" style="left:607px;width:100px"></div>
<div class="c even r" style="left:707px;width:100px"></div>
<div class="c even" style="left:807px;width:100px"></div>
<div class="c even" style="left:907px;width:100px"></div>
<div class="c even" style="left:1007px;width:100px"></div>
<div class="c even r" style="left:1107px;width:100px"></div>
<div class="c even" style="left:1207px;width:100px"></div>
<div class="c even" style="left:1307px;width:100px"></div>
<div class="c" style="left:1406px;width:133px;background:#c0c0c0;border:none"></div>
</div>
<div class="row" style="top:379px;width:1556px">
<div class="c ind" style="left:0px;width:42px"></div>
<div class="c gc odd" style="left:42px;width:100px">2025. 06. 03.</div>
<div class="c odd" style="left:142px;width:145px">250603  sz. számla kiegyenlítés</div>
<div class="c odd" style="left:287px;width:20px">"HC</div>
<div class="c odd r" style="left:307px;width:100px"></div>
<div class="c odd r" style="left:407px;width:100px"></div>
<div class="c odd r" style="left:507px;width:100px"></div>
<div class="c odd r" style="left:607px;width:100px"></div>
<div class="c odd r" style="left:707px;width:100px"></div>
<div class="c odd" style="left:807px;width:100px"></div>
<div class="c odd" style="left:907px;width:100px"></div>
<div class="c odd" style="left:1007px;width:100px"></div>
<div class="c odd r" style="left:1107px;width:100px"></div>
<div class="c odd" style="left:1207px;width:100px"></div>
<div class="c odd" style="left:1307px;width:100px"></div>
<div class="c" style="left:1406px;width:133px;background:#c0c0c0;border:none"></div>
</div>
<div class="row" style="top:396px;width:1556px">
<div class="c ind" style="left:0px;width:42px"></div>
<div class="c gc even" style="left:42px;width:100px">2025. 06. 03.</div>
<div class="c even" style="left:142px;width:145px">250603  sz. számla kiegyenlítés</div>
<div class="c even" style="left:287px;width:20px">"HC</div>
<div class="c even r" style="left:307px;width:100px"></div>
<div class="c even r" style="left:407px;width:100px"></div>
<div class="c even r" style="left:507px;width:100px"></div>
<div class="c even r" style="left:607px;width:100px"></div>
<div class="c even r" style="left:707px;width:100px"></div>
<div class="c even" style="left:807px;width:100px"></div>
<div class="c even" style="left:907px;width:100px"></div>
<div class="c even" style="left:1007px;width:100px"></div>
<div class="c even r" style="left:1107px;width:100px"></div>
<div class="c even" style="left:1207px;width:100px"></div>
<div class="c even" style="left:1307px;width:100px"></div>
<div class="c" style="left:1406px;width:133px;background:#c0c0c0;border:none"></div>
</div>
<div class="row" style="top:413px;width:1556px">
<div class="c ind" style="left:0px;width:42px"></div>
<div class="c gc odd" style="left:42px;width:100px">2025. 06. 03.</div>
<div class="c odd" style="left:142px;width:145px">250603_3  sz. számla kiegyenlítés</div>
<div class="c odd" style="left:287px;width:20px">115</div>
<div class="c odd r" style="left:307px;width:100px"></div>
<div class="c odd r" style="left:407px;width:100px"></div>
<div class="c odd r" style="left:507px;width:100px"></div>
<div class="c odd r" style="left:607px;width:100px"></div>
<div class="c odd r" style="left:707px;width:100px"></div>
<div class="c odd" style="left:807px;width:100px"></div>
<div class="c odd" style="left:907px;width:100px"></div>
<div class="c odd" style="left:1007px;width:100px"></div>
<div class="c odd r" style="left:1107px;width:100px"></div>
<div class="c odd" style="left:1207px;width:100px"></div>
<div class="c odd" style="left:1307px;width:100px"></div>
<div class="c" style="left:1406px;width:133px;background:#c0c0c0;border:none"></div>
</div>
<div class="row" style="top:430px;width:1556px">
<div class="c ind" style="left:0px;width:42px"></div>
<div class="c gc even" style="left:42px;width:100px">2025. 07. 15.</div>
<div class="c even" style="left:142px;width:145px">PF ÁFÁS dev  sz. számla kiegyenlítés</div>
<div class="c even" style="left:287px;width:20px">Pér</div>
<div class="c even r" style="left:307px;width:100px"></div>
<div class="c even r" style="left:407px;width:100px"></div>
<div class="c even r" style="left:507px;width:100px"></div>
<div class="c even r" style="left:607px;width:100px"></div>
<div class="c even r" style="left:707px;width:100px"></div>
<div class="c even" style="left:807px;width:100px"></div>
<div class="c even" style="left:907px;width:100px"></div>
<div class="c even" style="left:1007px;width:100px"></div>
<div class="c even r" style="left:1107px;width:100px"></div>
<div class="c even" style="left:1207px;width:100px"></div>
<div class="c even" style="left:1307px;width:100px"></div>
<div class="c" style="left:1406px;width:133px;background:#c0c0c0;border:none"></div>
</div>
<div class="row" style="top:447px;width:1556px">
<div class="c ind" style="left:0px;width:42px"></div>
<div class="c gc odd" style="left:42px;width:100px">2025. 07. 15.</div>
<div class="c odd" style="left:142px;width:145px">PF ÁFÁS dev  sz. számla kiegyenlítés</div>
<div class="c odd" style="left:287px;width:20px">Pér</div>
<div class="c odd r" style="left:307px;width:100px"></div>
<div class="c odd r" style="left:407px;width:100px"></div>
<div class="c odd r" style="left:507px;width:100px"></div>
<div class="c odd r" style="left:607px;width:100px"></div>
<div class="c odd r" style="left:707px;width:100px"></div>
<div class="c odd" style="left:807px;width:100px"></div>
<div class="c odd" style="left:907px;width:100px"></div>
<div class="c odd" style="left:1007px;width:100px"></div>
<div class="c odd r" style="left:1107px;width:100px"></div>
<div class="c odd" style="left:1207px;width:100px"></div>
<div class="c odd" style="left:1307px;width:100px"></div>
<div class="c" style="left:1406px;width:133px;background:#c0c0c0;border:none"></div>
</div>
<div class="row" style="top:464px;width:1556px">
<div class="c ind" style="left:0px;width:42px"></div>
<div class="c gc even" style="left:42px;width:100px">2025. 07. 15.</div>
<div class="c even" style="left:142px;width:145px">PF ÁFÁS dev  sz. számla kiegyenlítés</div>
<div class="c even" style="left:287px;width:20px">Pér</div>
<div class="c even r" style="left:307px;width:100px"></div>
<div class="c even r" style="left:407px;width:100px"></div>
<div class="c even r" style="left:507px;width:100px"></div>
<div class="c even r" style="left:607px;width:100px"></div>
<div class="c even r" style="left:707px;width:100px"></div>
<div class="c even" style="left:807px;width:100px"></div>
<div class="c even" style="left:907px;width:100px"></div>
<div class="c even" style="left:1007px;width:100px"></div>
<div class="c even r" style="left:1107px;width:100px"></div>
<div class="c even" style="left:1207px;width:100px"></div>
<div class="c even" style="left:1307px;width:100px"></div>
<div class="c" style="left:1406px;width:133px;background:#c0c0c0;border:none"></div>
</div>
<div class="row" style="top:481px;width:1556px">
<div class="c ind" style="left:0px;width:42px"></div>
<div class="c gc odd" style="left:42px;width:100px">2025. 09. 05.</div>
<div class="c odd" style="left:142px;width:145px">50 nem levonható  sz. számla kiegyenlítés</div>
<div class="c odd" style="left:287px;width:20px">"TR</div>
<div class="c odd r" style="left:307px;width:100px"></div>
<div class="c odd r" style="left:407px;width:100px"></div>
<div class="c odd r" style="left:507px;width:100px"></div>
<div class="c odd r" style="left:607px;width:100px"></div>
<div class="c odd r" style="left:707px;width:100px"></div>
<div class="c odd" style="left:807px;width:100px"></div>
<div class="c odd" style="left:907px;width:100px"></div>
<div class="c odd" style="left:1007px;width:100px"></div>
<div class="c odd r" style="left:1107px;width:100px"></div>
<div class="c odd" style="left:1207px;width:100px"></div>
<div class="c odd" style="left:1307px;width:100px"></div>
<div class="c" style="left:1406px;width:133px;background:#c0c0c0;border:none"></div>
</div>
<div class="row" style="top:498px;width:1556px">
<div class="c ind" style="left:0px;width:42px"></div>
<div class="c gc even" style="left:42px;width:100px">2025. 09. 05.</div>
<div class="c even" style="left:142px;width:145px">több soros  sz. számla kiegyenlítés</div>
<div class="c even" style="left:287px;width:20px">"HC</div>
<div class="c even r" style="left:307px;width:100px">1 528,23 EUR</div>
<div class="c even r" style="left:407px;width:100px">600 000,00</div>
<div class="c even r" style="left:507px;width:100px"></div>
<div class="c even r" style="left:607px;width:100px"></div>
<div class="c even r" style="left:707px;width:100px">392,61</div>
<div class="c even" style="left:807px;width:100px">EUR Bank</div>
<div class="c even" style="left:907px;width:100px">55555555-55555555</div>
<div class="c even" style="left:1007px;width:100px"></div>
<div class="c even r" style="left:1107px;width:100px">2038</div>
<div class="c even" style="left:1207px;width:100px">2509</div>
<div class="c even" style="left:1307px;width:100px">2025.09.05</div>
<div class="c" style="left:1406px;width:133px;background:#c0c0c0;border:none"></div>
</div>
<div class="row" style="top:515px;width:1556px">
<div class="c ind" style="left:0px;width:42px"></div>
<div class="c gc odd" style="left:42px;width:100px">2025. 09. 05.</div>
<div class="c odd" style="left:142px;width:145px">Visszautalás  sz. számla kiegyenlítés</div>
<div class="c odd" style="left:287px;width:20px">"HC</div>
<div class="c odd r" style="left:307px;width:100px"></div>
<div class="c odd r" style="left:407px;width:100px"></div>
<div class="c odd r" style="left:507px;width:100px">100,00 EUR</div>
<div class="c odd r" style="left:607px;width:100px">39 261,00</div>
<div class="c odd r" style="left:707px;width:100px">392,61</div>
<div class="c odd" style="left:807px;width:100px">EUR Bank</div>
<div class="c odd" style="left:907px;width:100px">55555555-55555555</div>
<div class="c odd" style="left:1007px;width:100px"></div>
<div class="c odd r" style="left:1107px;width:100px">2050</div>
<div class="c odd" style="left:1207px;width:100px">2509</div>
<div class="c odd" style="left:1307px;width:100px">2025.09.05</div>
<div class="c" style="left:1406px;width:133px;background:#c0c0c0;border:none"></div>
</div>
<div class="row" style="top:532px;width:1556px">
<div class="c ind" style="left:0px;width:42px"></div>
<div class="c gc even" style="left:42px;width:100px">2025. 09. 05.</div>
<div class="c even" style="left:142px;width:145px">MK soronként  sz. számla kiegyenlítés</div>
<div class="c even" style="left:287px;width:20px">"HC</div>
<div class="c even r" style="left:307px;width:100px"></div>
<div class="c even r" style="left:407px;width:100px"></div>
<div class="c even r" style="left:507px;width:100px">2 000,00 EUR</div>
<div class="c even r" style="left:607px;width:100px">785 220,00</div>
<div class="c even r" style="left:707px;width:100px">392,61</div>
<div class="c even" style="left:807px;width:100px">EUR Bank</div>
<div class="c even" style="left:907px;width:100px">55555555-55555555</div>
<div class="c even" style="left:1007px;width:100px"></div>
<div class="c even r" style="left:1107px;width:100px">2062</div>
<div class="c even" style="left:1207px;width:100px">2509</div>
<div class="c even" style="left:1307px;width:100px">2025.09.05</div>
<div class="c" style="left:1406px;width:133px;background:#c0c0c0;border:none"></div>
</div>
<div class="row" style="top:549px;width:1556px">
<div class="c ind" style="left:0px;width:42px"></div>
<div class="c gc odd" style="left:42px;width:100px">2025. 09. 15.</div>
<div class="c odd" style="left:142px;width:145px">elhat2  sz. számla kiegyenlítés</div>
<div class="c odd" style="left:287px;width:20px">"HC</div>
<div class="c odd r" style="left:307px;width:100px">51,29 EUR</div>
<div class="c odd r" style="left:407px;width:100px">20 000,00</div>
<div class="c odd r" style="left:507px;width:100px"></div>
<div class="c odd r" style="left:607px;width:100px"></div>
<div class="c odd r" style="left:707px;width:100px">389,96</div>
<div class="c odd" style="left:807px;width:100px">EUR Bank</div>
<div class="c odd" style="left:907px;width:100px">55555555-55555555</div>
<div class="c odd" style="left:1007px;width:100px"></div>
<div class="c odd r" style="left:1107px;width:100px">2022</div>
<div class="c odd" style="left:1207px;width:100px">2509</div>
<div class="c odd" style="left:1307px;width:100px">2025.09.05</div>
<div class="c" style="left:1406px;width:133px;background:#c0c0c0;border:none"></div>
</div>
<div class="row" style="top:566px;width:1556px">
<div class="c ind" style="left:0px;width:42px"></div>
<div class="c gc even" style="left:42px;width:100px">2025. 09. 15.</div>
<div class="c even" style="left:142px;width:145px">250529  sz. számla kiegyenlítés</div>
<div class="c even" style="left:287px;width:20px">"HC</div>
<div class="c even r" style="left:307px;width:100px">100,00 EUR</div>
<div class="c even r" style="left:407px;width:100px">38 996,00</div>
<div class="c even r" style="left:507px;width:100px"></div>
<div class="c even r" style="left:607px;width:100px"></div>
<div class="c even r" style="left:707px;width:100px">389,96</div>
<div class="c even" style="left:807px;width:100px">EUR Bank</div>
<div class="c even" style="left:907px;width:100px">55555555-55555555</div>
<div class="c even" style="left:1007px;width:100px"></div>
<div class="c even r" style="left:1107px;width:100px">2033</div>
<div class="c even" style="left:1207px;width:100px">2509</div>
<div class="c even" style="left:1307px;width:100px">2025.09.05</div>
<div class="c" style="left:1406px;width:133px;background:#c0c0c0;border:none"></div>
</div>
<div class="row" style="top:583px;width:1556px">
<div class="c ind" style="left:0px;width:42px"></div>
<div class="c gc odd" style="left:42px;width:100px">2025. 09. 15.</div>
<div class="c odd" style="left:142px;width:145px">2020/00003  sz. számla kiegyenlítés</div>
<div class="c odd" style="left:287px;width:20px">"HC</div>
<div class="c odd r" style="left:307px;width:100px">5,13 EUR</div>
<div class="c odd r" style="left:407px;width:100px">2 000,00</div>
<div class="c odd r" style="left:507px;width:100px"></div>
<div class="c odd r" style="left:607px;width:100px"></div>
<div class="c odd r" style="left:707px;width:100px">389,96</div>
<div class="c odd" style="left:807px;width:100px">EUR Bank</div>
<div class="c odd" style="left:907px;width:100px">55555555-55555555</div>
<div class="c odd" style="left:1007px;width:100px"></div>
<div class="c odd r" style="left:1107px;width:100px">2032</div>
<div class="c odd" style="left:1207px;width:100px">2509</div>
<div class="c odd" style="left:1307px;width:100px">2025.09.05</div>
<div class="c" style="left:1406px;width:133px;background:#c0c0c0;border:none"></div>
</div>
<svg class="ico" style="left:3px;top:44px" width="5" height="7" viewBox="0 0 5 7"><path d="M0 0 L4 3.5 L0 7Z" fill="#5a8ae8"/></svg>
<div class="a" style="left:1539px;top:39px;width:17px;height:560px;background:#f0f0f0"></div>
<svg class="ico" style="left:1542px;top:586px" width="10" height="8" viewBox="0 0 10 8"><path d="M1 2 L5 6 L9 2" stroke="#555" stroke-width="2" fill="none"/></svg>
</div>
<div class="a" style="left:358px;top:950px;width:1556px;height:22px;background:linear-gradient(#d2e6fe,#bcd8fc 50%,#c8e0fc);border-top-left-radius:4px;border-top-right-radius:4px;border-bottom:1px solid #b8d0ec"></div>
<div class="t" style="left:364px;top:956px;font-size:12px;font-weight:bold;color:#5a88c0;letter-spacing:-0.3px">Jelmagyarázat</div>
<svg class="ico" style="left:1900px;top:957px" width="10" height="6" viewBox="0 0 10 6"><path d="M1 5 L5 1 L9 5Z" fill="#2a6ac0"/></svg>
<div class="a" style="left:357px;top:972px;width:1557px;height:40px;border:1px solid #c4d4e8;border-top:none;border-radius:0 0 6px 6px;background:#f4f4f4"></div>
<div class="t" style="left:384px;top:983px;font-size:12px;color:#777">Tartozik HUF:</div>
<div class="t" style="left:471px;top:983px;font-size:12px;font-weight:bold;color:#555">100 222 595,18</div>
<div class="t" style="left:636px;top:983px;font-size:12px;color:#777">Követel HUF:</div>
<div class="t" style="left:720px;top:983px;font-size:12px;font-weight:bold;color:#555">10 215 132,75</div>
<div class="a" style="left:698px;top:136px;width:1234px;height:716px;background:#f0f0f0;border:1px solid #6a6a6a;border-right:none;box-shadow:-3px 2px 0 rgba(120,120,120,0.45)"></div>
<div class="a" style="left:699px;top:137px;width:1233px;height:30px;background:#fff"></div>
<svg class="ico" style="left:708px;top:143px" width="16" height="16" viewBox="0 0 16 16"><defs><linearGradient id="ig708" x1="0" y1="0" x2="0" y2="1"><stop offset="0" stop-color="#6ab8f0"/><stop offset="0.55" stop-color="#1a7ad0"/><stop offset="1" stop-color="#0a5ab0"/></linearGradient></defs><rect x="0" y="0" width="16" height="16" rx="2.5" fill="url(#ig708)"/><path d="M2.2 5 V10.5 M4.5 10.5 V7 Q6 6 7 7.5 V10.5 M7 7.5 Q8.5 6 9.5 7.5 V10.5 M14 7.2 Q12 6 11 8 Q11 10.5 13 10.3 M2 11.5 Q8 12.5 15 10.5" stroke="#fff" stroke-width="1.1" fill="none"/></svg>
<div class="t" style="left:729px;top:146px;font-size:12px;letter-spacing:-0.2px">Rekalkuláció előnéző</div>
<div class="a" style="left:1865px;top:151px;width:10px;height:1px;background:#c8c8c8"></div>
<div class="a" style="left:1910px;top:146px;width:10px;height:10px;border:1px solid #000"></div>
<div class="a" style="left:700px;top:167px;width:1232px;height:30px;background:linear-gradient(#dedede,#eeeeee 40%,#f4f4f4 60%,#dcdcdc);border-radius:4px 0 0 4px"></div>
<div class="a" style="left:705px;top:176px;width:1px;height:13px;background:#c8c8c8;box-shadow:1px 0 0 #fff"></div>
<div class="gr" style="left:705px;top:203px;width:1227px;height:613px;border:1px solid #000;border-right:none;border-bottom:none;background:#fff">
<div class="a" style="left:0;top:0;width:1240px;height:23px;background:linear-gradient(#f8f8f8,#efefef 60%,#e2e2e2)"></div>
<div class="a" style="left:41px;top:0;width:1px;height:23px;background:#dadada"></div>
<div class="a" style="left:141px;top:0;width:1px;height:23px;background:#dadada"></div>
<div class="t" style="left:45px;top:5px;font-size:12px">Biz. dátum</div>
<div class="a" style="left:241px;top:0;width:1px;height:23px;background:#dadada"></div>
<div class="t" style="left:145px;top:5px;font-size:12px">Azonosító</div>
<div class="fb" style="left:230px;top:6px"></div>
<div class="a" style="left:341px;top:0;width:1px;height:23px;background:#dadada"></div>
<div class="t" style="left:245px;top:5px;font-size:12px">Tartozik</div>
<div class="fb" style="left:330px;top:6px"></div>
<div class="a" style="left:441px;top:0;width:1px;height:23px;background:#dadada"></div>
<div class="t" style="left:345px;top:5px;font-size:12px">Követel</div>
<div class="fb" style="left:430px;top:6px"></div>
<div class="a" style="left:541px;top:0;width:1px;height:23px;background:#dadada"></div>
<div class="t" style="left:445px;top:5px;font-size:12px">Tartozik HUF</div>
<div class="fb" style="left:530px;top:6px"></div>
<div class="a" style="left:641px;top:0;width:1px;height:23px;background:#dadada"></div>
<div class="t" style="left:545px;top:5px;font-size:12px">Követel HUF</div>
<div class="fb" style="left:630px;top:6px"></div>
<div class="a" style="left:741px;top:0;width:1px;height:23px;background:#dadada"></div>
<div class="t" style="left:645px;top:5px;font-size:12px">Cummulated...</div>
<div class="fb" style="left:730px;top:6px"></div>
<div class="a" style="left:841px;top:0;width:1px;height:23px;background:#dadada"></div>
<div class="t" style="left:745px;top:5px;font-size:12px">Cummulated...</div>
<div class="fb" style="left:830px;top:6px"></div>
<div class="a" style="left:941px;top:0;width:1px;height:23px;background:#dadada"></div>
<div class="t" style="left:845px;top:5px;font-size:12px">Számla árfol...</div>
<div class="fb" style="left:930px;top:6px"></div>
<div class="a" style="left:1041px;top:0;width:1px;height:23px;background:#dadada"></div>
<div class="t" style="left:945px;top:5px;font-size:12px">Bejövo</div>
<div class="fb" style="left:1030px;top:6px"></div>
<div class="a" style="left:1089px;top:0;width:1px;height:23px;background:#dadada"></div>
<div class="t" style="left:1045px;top:5px;font-size:12px">Pé...</div>
<div class="fb" style="left:1078px;top:6px"></div>
<div class="a" style="left:1139px;top:0;width:1px;height:23px;background:#dadada"></div>
<div class="t" style="left:1093px;top:5px;font-size:12px">BJL...</div>
<div class="fb" style="left:1128px;top:6px"></div>
<div class="a" style="left:1239px;top:0;width:1px;height:23px;background:#dadada"></div>
<div class="t" style="left:1143px;top:5px;font-size:12px">Új árfolyam</div>
<svg class="ico" style="left:5px;top:6px" width="12" height="11" viewBox="0 0 12 11"><rect x="0.5" y="0.5" width="11" height="10" fill="#fbf59a" stroke="#a09a70"/><rect x="1" y="4" width="10" height="3" fill="#6d8ff0"/><path d="M3 2.5H9 M3 8.5H9" stroke="#000" stroke-width="1"/></svg>
<div class="t" style="left:124px;top:2px;font-size:9px">1</div>
<svg class="ico" style="left:130px;top:9px" width="8" height="5" viewBox="0 0 8 5"><path d="M0 4.5 L4 0 L8 4.5Z" fill="#1a7ad0"/></svg>
<div class="row" style="top:23px;width:1240px">
<div class="c ind" style="left:0px;width:42px"></div>
<div class="c gc odd sel" style="left:42px;width:100px">2025. 09. 05.</div>
<div class="c odd sel r" style="left:142px;width:100px">1967</div>
<div class="c odd sel r" style="left:242px;width:100px">0,00</div>
<div class="c odd sel r" style="left:342px;width:100px">528,12</div>
<div class="c odd sel r" style="left:442px;width:100px">0,00</div>
<div class="c odd sel r" style="left:542px;width:100px">216 935,85</div>
<div class="c odd sel r" style="left:642px;width:100px">1 146,07</div>
<div class="c odd sel r" style="left:742px;width:100px">470 764,95</div>
<div class="c odd sel" style="left:842px;width:100px">0</div>
<div class="c odd sel" style="left:942px;width:100px"></div>
<div class="c odd sel" style="left:1042px;width:48px">euro</div>
<div class="c odd sel r" style="left:1090px;width:50px">6</div>
<div class="c odd sel" style="left:1140px;width:100px">410,77</div>
</div>
<div class="row" style="top:40px;width:1240px">
<div class="c ind" style="left:0px;width:42px"></div>
<div class="c gc even" style="left:42px;width:100px">2025. 09. 05.</div>
<div class="c even r" style="left:142px;width:100px">2038</div>
<div class="c even r" style="left:242px;width:100px">0,00</div>
<div class="c even r" style="left:342px;width:100px">1 528,23</div>
<div class="c even r" style="left:442px;width:100px">0,00</div>
<div class="c even r" style="left:542px;width:100px">627 751,04</div>
<div class="c even r" style="left:642px;width:100px">-382,16</div>
<div class="c even r" style="left:742px;width:100px">-156 986,09</div>
<div class="c even" style="left:842px;width:100px">0</div>
<div class="c even" style="left:942px;width:100px"></div>
<div class="c even" style="left:1042px;width:48px">euro</div>
<div class="c even r" style="left:1090px;width:50px">6</div>
<div class="c even" style="left:1140px;width:100px">410,77</div>
</div>
<div class="row" style="top:57px;width:1240px">
<div class="c ind" style="left:0px;width:42px"></div>
<div class="c gc odd" style="left:42px;width:100px">2025. 09. 05.</div>
<div class="c odd r" style="left:142px;width:100px">2050</div>
<div class="c odd r" style="left:242px;width:100px">100,00</div>
<div class="c odd r" style="left:342px;width:100px">0,00</div>
<div class="c odd r" style="left:442px;width:100px">39 261,00</div>
<div class="c odd r" style="left:542px;width:100px">0,00</div>
<div class="c odd r" style="left:642px;width:100px">-282,16</div>
<div class="c odd r" style="left:742px;width:100px">-117 725,09</div>
<div class="c odd" style="left:842px;width:100px">390,000000000000000</div>
<div class="c odd" style="left:942px;width:100px"></div>
<div class="c odd" style="left:1042px;width:48px">euro</div>
<div class="c odd r" style="left:1090px;width:50px">6</div>
<div class="c odd" style="left:1140px;width:100px">392,61</div>
<svg class="ico" style="left:986px;top:3px" width="9" height="11" viewBox="0 0 9 11"><path d="M0.5 0.5 H6 L8.5 3 V10.5 H0.5 Z" fill="#fff" stroke="#4a68a8"/><path d="M2.5 6 L4.5 8.5 L8.5 3.5" stroke="#1a5fd8" stroke-width="2" fill="none"/></svg>
</div>
<div class="row" style="top:74px;width:1240px">
<div class="c ind" style="left:0px;width:42px"></div>
<div class="c gc even" style="left:42px;width:100px">2025. 09. 05.</div>
<div class="c even r" style="left:142px;width:100px">2062</div>
<div class="c even r" style="left:242px;width:100px">2 000,00</div>
<div class="c even r" style="left:342px;width:100px">0,00</div>
<div class="c even r" style="left:442px;width:100px">785 220,00</div>
<div class="c even r" style="left:542px;width:100px">0,00</div>
<div class="c even r" style="left:642px;width:100px">1 617,84</div>
<div class="c even r" style="left:742px;width:100px">628 498,91</div>
<div class="c even" style="left:842px;width:100px">390,000000000000000</div>
<div class="c even" style="left:942px;width:100px"></div>
<div class="c even" style="left:1042px;width:48px">euro</div>
<div class="c even r" style="left:1090px;width:50px">6</div>
<div class="c even" style="left:1140px;width:100px">392,61</div>
<svg class="ico" style="left:986px;top:3px" width="9" height="11" viewBox="0 0 9 11"><path d="M0.5 0.5 H6 L8.5 3 V10.5 H0.5 Z" fill="#fff" stroke="#4a68a8"/><path d="M2.5 6 L4.5 8.5 L8.5 3.5" stroke="#1a5fd8" stroke-width="2" fill="none"/></svg>
</div>
<div class="row" style="top:91px;width:1240px">
<div class="c ind" style="left:0px;width:42px"></div>
<div class="c gc odd" style="left:42px;width:100px">2025. 09. 15.</div>
<div class="c odd r" style="left:142px;width:100px">2022</div>
<div class="c odd r" style="left:242px;width:100px">0,00</div>
<div class="c odd r" style="left:342px;width:100px">51,29</div>
<div class="c odd r" style="left:442px;width:100px">0,00</div>
<div class="c odd r" style="left:542px;width:100px">20 001,05</div>
<div class="c odd r" style="left:642px;width:100px">-333,45</div>
<div class="c odd r" style="left:742px;width:100px">-137 726,14</div>
<div class="c odd" style="left:842px;width:100px">0</div>
<div class="c odd" style="left:942px;width:100px"></div>
<div class="c odd" style="left:1042px;width:48px">euro</div>
<div class="c odd r" style="left:1090px;width:50px">6</div>
<div class="c odd" style="left:1140px;width:100px">389,96</div>
</div>
<div class="row" style="top:108px;width:1240px">
<div class="c ind" style="left:0px;width:42px"></div>
<div class="c gc even" style="left:42px;width:100px">2025. 09. 15.</div>
<div class="c even r" style="left:142px;width:100px">2033</div>
<div class="c even r" style="left:242px;width:100px">0,00</div>
<div class="c even r" style="left:342px;width:100px">100,00</div>
<div class="c even r" style="left:442px;width:100px">0,00</div>
<div class="c even r" style="left:542px;width:100px">38 996,00</div>
<div class="c even r" style="left:642px;width:100px">-433,45</div>
<div class="c even r" style="left:742px;width:100px">-176 722,14</div>
<div class="c even" style="left:842px;width:100px">404,360000000000000</div>
<div class="c even" style="left:942px;width:100px"></div>
<div class="c even" style="left:1042px;width:48px">euro</div>
<div class="c even r" style="left:1090px;width:50px">6</div>
<div class="c even" style="left:1140px;width:100px">389,96</div>
</div>
<div class="row" style="top:125px;width:1240px">
<div class="c ind" style="left:0px;width:42px"></div>
<div class="c gc odd" style="left:42px;width:100px">2025. 09. 15.</div>
<div class="c odd r" style="left:142px;width:100px">2032</div>
<div class="c odd r" style="left:242px;width:100px">0,00</div>
<div class="c odd r" style="left:342px;width:100px">5,13</div>
<div class="c odd r" style="left:442px;width:100px">0,00</div>
<div class="c odd r" style="left:542px;width:100px">2 000,49</div>
<div class="c odd r" style="left:642px;width:100px">-438,58</div>
<div class="c odd r" style="left:742px;width:100px">-178 722,63</div>
<div class="c odd" style="left:842px;width:100px">0</div>
<div class="c odd" style="left:942px;width:100px"></div>
<div class="c odd" style="left:1042px;width:48px">euro</div>
<div class="c odd r" style="left:1090px;width:50px">6</div>
<div class="c odd" style="left:1140px;width:100px">389,96</div>
</div>
<div class="row" style="top:142px;width:1240px">
<div class="c ind" style="left:0px;width:42px"></div>
<div class="c gc even" style="left:42px;width:100px">2025. 09. 15.</div>
<div class="c even r" style="left:142px;width:100px">2030</div>
<div class="c even r" style="left:242px;width:100px">5,13</div>
<div class="c even r" style="left:342px;width:100px">0,00</div>
<div class="c even r" style="left:442px;width:100px">2 000,49</div>
<div class="c even r" style="left:542px;width:100px">0,00</div>
<div class="c even r" style="left:642px;width:100px">-433,45</div>
<div class="c even r" style="left:742px;width:100px">-176 722,14</div>
<div class="c even" style="left:842px;width:100px">0</div>
<div class="c even" style="left:942px;width:100px"></div>
<div class="c even" style="left:1042px;width:48px">euro</div>
<div class="c even r" style="left:1090px;width:50px">6</div>
<div class="c even" style="left:1140px;width:100px">389,96</div>
<svg class="ico" style="left:986px;top:3px" width="9" height="11" viewBox="0 0 9 11"><path d="M0.5 0.5 H6 L8.5 3 V10.5 H0.5 Z" fill="#fff" stroke="#4a68a8"/><path d="M2.5 6 L4.5 8.5 L8.5 3.5" stroke="#1a5fd8" stroke-width="2" fill="none"/></svg>
</div>
<div class="row" style="top:159px;width:1240px">
<div class="c ind" style="left:0px;width:42px"></div>
<div class="c gc odd" style="left:42px;width:100px">2025. 09. 15.</div>
<div class="c odd r" style="left:142px;width:100px">2028</div>
<div class="c odd r" style="left:242px;width:100px">0,00</div>
<div class="c odd r" style="left:342px;width:100px">50,00</div>
<div class="c odd r" style="left:442px;width:100px">0,00</div>
<div class="c odd r" style="left:542px;width:100px">19 498,00</div>
<div class="c odd r" style="left:642px;width:100px">-483,45</div>
<div class="c odd r" style="left:742px;width:100px">-196 220,14</div>
<div class="c odd" style="left:842px;width:100px">402,900000000000000</div>
<div class="c odd" style="left:942px;width:100px"></div>
<div class="c odd" style="left:1042px;width:48px">euro</div>
<div class="c odd r" style="left:1090px;width:50px">6</div>
<div class="c odd" style="left:1140px;width:100px">389,96</div>
</div>
<div class="row" style="top:176px;width:1240px">
<div class="c ind" style="left:0px;width:42px"></div>
<div class="c gc even" style="left:42px;width:100px">2025. 09. 15.</div>
<div class="c even r" style="left:142px;width:100px">2023</div>
<div class="c even r" style="left:242px;width:100px">51,29</div>
<div class="c even r" style="left:342px;width:100px">0,00</div>
<div class="c even r" style="left:442px;width:100px">20 001,05</div>
<div class="c even r" style="left:542px;width:100px">0,00</div>
<div class="c even r" style="left:642px;width:100px">-432,16</div>
<div class="c even r" style="left:742px;width:100px">-176 219,09</div>
<div class="c even" style="left:842px;width:100px">0</div>
<div class="c even" style="left:942px;width:100px"></div>
<div class="c even" style="left:1042px;width:48px">euro</div>
<div class="c even r" style="left:1090px;width:50px">6</div>
<div class="c even" style="left:1140px;width:100px">389,96</div>
<svg class="ico" style="left:986px;top:3px" width="9" height="11" viewBox="0 0 9 11"><path d="M0.5 0.5 H6 L8.5 3 V10.5 H0.5 Z" fill="#fff" stroke="#4a68a8"/><path d="M2.5 6 L4.5 8.5 L8.5 3.5" stroke="#1a5fd8" stroke-width="2" fill="none"/></svg>
</div>
<div class="row" style="top:193px;width:1240px">
<div class="c ind" style="left:0px;width:42px"></div>
<div class="c gc odd" style="left:42px;width:100px">2025. 09. 15.</div>
<div class="c odd r" style="left:142px;width:100px">2029</div>
<div class="c odd r" style="left:242px;width:100px">50,00</div>
<div class="c odd r" style="left:342px;width:100px">0,00</div>
<div class="c odd r" style="left:442px;width:100px">19 498,00</div>
<div class="c odd r" style="left:542px;width:100px">0,00</div>
<div class="c odd r" style="left:642px;width:100px">-382,16</div>
<div class="c odd r" style="left:742px;width:100px">-156 721,09</div>
<div class="c odd" style="left:842px;width:100px">402,900000000000000</div>
<div class="c odd" style="left:942px;width:100px"></div>
<div class="c odd" style="left:1042px;width:48px">euro</div>
<div class="c odd r" style="left:1090px;width:50px">6</div>
<div class="c odd" style="left:1140px;width:100px">389,96</div>
<svg class="ico" style="left:986px;top:3px" width="9" height="11" viewBox="0 0 9 11"><path d="M0.5 0.5 H6 L8.5 3 V10.5 H0.5 Z" fill="#fff" stroke="#4a68a8"/><path d="M2.5 6 L4.5 8.5 L8.5 3.5" stroke="#1a5fd8" stroke-width="2" fill="none"/></svg>
</div>
<div class="row" style="top:210px;width:1240px">
<div class="c ind" style="left:0px;width:42px"></div>
<div class="c gc even" style="left:42px;width:100px">2025. 09. 17.</div>
<div class="c even r" style="left:142px;width:100px">2073</div>
<div class="c even r" style="left:242px;width:100px">0,00</div>
<div class="c even r" style="left:342px;width:100px">100,00</div>
<div class="c even r" style="left:442px;width:100px">0,00</div>
<div class="c even r" style="left:542px;width:100px">38 848,00</div>
<div class="c even r" style="left:642px;width:100px">1 517,84</div>
<div class="c even r" style="left:742px;width:100px">589 650,91</div>
<div class="c even" style="left:842px;width:100px">395,370000000000000</div>
<div class="c even" style="left:942px;width:100px"></div>
<div class="c even" style="left:1042px;width:48px">euro</div>
<div class="c even r" style="left:1090px;width:50px">6</div>
<div class="c even" style="left:1140px;width:100px">388,48</div>
</div>
<div class="row" style="top:227px;width:1240px">
<div class="c ind" style="left:0px;width:42px"></div>
<div class="c gc odd" style="left:42px;width:100px">2025. 09. 17.</div>
<div class="c odd r" style="left:142px;width:100px">2110</div>
<div class="c odd r" style="left:242px;width:100px">5 000,00</div>
<div class="c odd r" style="left:342px;width:100px">0,00</div>
<div class="c odd r" style="left:442px;width:100px">1 949 150,00</div>
<div class="c odd r" style="left:542px;width:100px">0,00</div>
<div class="c odd r" style="left:642px;width:100px">6 517,84</div>
<div class="c odd r" style="left:742px;width:100px">2 538 800,91</div>
<div class="c odd" style="left:842px;width:100px">363,590000000000000</div>
<div class="c odd" style="left:942px;width:100px"></div>
<div class="c odd" style="left:1042px;width:48px">euro</div>
<div class="c odd r" style="left:1090px;width:50px">6</div>
<div class="c odd" style="left:1140px;width:100px">389,83</div>
<svg class="ico" style="left:986px;top:3px" width="9" height="11" viewBox="0 0 9 11"><path d="M0.5 0.5 H6 L8.5 3 V10.5 H0.5 Z" fill="#fff" stroke="#4a68a8"/><path d="M2.5 6 L4.5 8.5 L8.5 3.5" stroke="#1a5fd8" stroke-width="2" fill="none"/></svg>
</div>
<div class="row" style="top:244px;width:1240px">
<div class="c ind" style="left:0px;width:42px"></div>
<div class="c gc even" style="left:42px;width:100px">2025. 09. 17.</div>
<div class="c even r" style="left:142px;width:100px">2112</div>
<div class="c even r" style="left:242px;width:100px">0,00</div>
<div class="c even r" style="left:342px;width:100px">2 000,00</div>
<div class="c even r" style="left:442px;width:100px">0,00</div>
<div class="c even r" style="left:542px;width:100px">779 040,00</div>
<div class="c even r" style="left:642px;width:100px">4 517,84</div>
<div class="c even r" style="left:742px;width:100px">1 759 760,91</div>
<div class="c even" style="left:842px;width:100px">363,590000000000000</div>
<div class="c even" style="left:942px;width:100px"></div>
<div class="c even" style="left:1042px;width:48px">euro</div>
<div class="c even r" style="left:1090px;width:50px">6</div>
<div class="c even" style="left:1140px;width:100px">389,52</div>
</div>
<div class="row" style="top:261px;width:1240px">
<div class="c ind" style="left:0px;width:42px"></div>
<div class="c gc odd" style="left:42px;width:100px">2025. 09. 17.</div>
<div class="c odd r" style="left:142px;width:100px">2114</div>
<div class="c odd r" style="left:242px;width:100px">3 000,00</div>
<div class="c odd r" style="left:342px;width:100px">0,00</div>
<div class="c odd r" style="left:442px;width:100px">1 169 490,00</div>
<div class="c odd r" style="left:542px;width:100px">0,00</div>
<div class="c odd r" style="left:642px;width:100px">7 517,84</div>
<div class="c odd r" style="left:742px;width:100px">2 929 250,91</div>
<div class="c odd" style="left:842px;width:100px">390,000000000000000</div>
<div class="c odd" style="left:942px;width:100px"></div>
<div class="c odd" style="left:1042px;width:48px">euro</div>
<div class="c odd r" style="left:1090px;width:50px">6</div>
<div class="c odd" style="left:1140px;width:100px">389,83</div>
<svg class="ico" style="left:986px;top:3px" width="9" height="11" viewBox="0 0 9 11"><path d="M0.5 0.5 H6 L8.5 3 V10.5 H0.5 Z" fill="#fff" stroke="#4a68a8"/><path d="M2.5 6 L4.5 8.5 L8.5 3.5" stroke="#1a5fd8" stroke-width="2" fill="none"/></svg>
</div>
<div class="row" style="top:278px;width:1240px">
<div class="c ind" style="left:0px;width:42px"></div>
<div class="c gc even" style="left:42px;width:100px">2025. 09. 17.</div>
<div class="c even r" style="left:142px;width:100px">2115</div>
<div class="c even r" style="left:242px;width:100px">0,00</div>
<div class="c even r" style="left:342px;width:100px">2 000,00</div>
<div class="c even r" style="left:442px;width:100px">0,00</div>
<div class="c even r" style="left:542px;width:100px">779 280,00</div>
<div class="c even r" style="left:642px;width:100px">5 517,84</div>
<div class="c even r" style="left:742px;width:100px">2 149 970,91</div>
<div class="c even" style="left:842px;width:100px">363,590000000000000</div>
<div class="c even" style="left:942px;width:100px"></div>
<div class="c even" style="left:1042px;width:48px">euro</div>
<div class="c even r" style="left:1090px;width:50px">6</div>
<div class="c even" style="left:1140px;width:100px">389,64</div>
</div>
<div class="row" style="top:295px;width:1240px">
<div class="c ind" style="left:0px;width:42px"></div>
<div class="c gc odd" style="left:42px;width:100px">2025. 09. 17.</div>
<div class="c odd r" style="left:142px;width:100px">2117</div>
<div class="c odd r" style="left:242px;width:100px">0,00</div>
<div class="c odd r" style="left:342px;width:100px">1 282,61</div>
<div class="c odd r" style="left:442px;width:100px">0,00</div>
<div class="c odd r" style="left:542px;width:100px">499 756,16</div>
<div class="c odd r" style="left:642px;width:100px">4 235,23</div>
<div class="c odd r" style="left:742px;width:100px">1 650 214,75</div>
<div class="c odd" style="left:842px;width:100px">0</div>
<div class="c odd" style="left:942px;width:100px"></div>
<div class="c odd" style="left:1042px;width:48px">euro</div>
<div class="c odd r" style="left:1090px;width:50px">6</div>
<div class="c odd" style="left:1140px;width:100px">389,64</div>
</div>
<div class="row" style="top:312px;width:1240px">
<div class="c ind" style="left:0px;width:42px"></div>
<div class="c gc even" style="left:42px;width:100px">2025. 09. 17.</div>
<div class="c even r" style="left:142px;width:100px">2120</div>
<div class="c even r" style="left:242px;width:100px">102,61</div>
<div class="c even r" style="left:342px;width:100px">0,00</div>
<div class="c even r" style="left:442px;width:100px">40 000,46</div>
<div class="c even r" style="left:542px;width:100px">0,00</div>
<div class="c even r" style="left:642px;width:100px">4 337,84</div>
<div class="c even r" style="left:742px;width:100px">1 690 215,21</div>
<div class="c even" style="left:842px;width:100px">0</div>
<div class="c even" style="left:942px;width:100px"></div>
<div class="c even" style="left:1042px;width:48px">euro</div>
<div class="c even r" style="left:1090px;width:50px">6</div>
<div class="c even" style="left:1140px;width:100px">389,83</div>
<svg class="ico" style="left:986px;top:3px" width="9" height="11" viewBox="0 0 9 11"><path d="M0.5 0.5 H6 L8.5 3 V10.5 H0.5 Z" fill="#fff" stroke="#4a68a8"/><path d="M2.5 6 L4.5 8.5 L8.5 3.5" stroke="#1a5fd8" stroke-width="2" fill="none"/></svg>
</div>
<div class="row" style="top:329px;width:1240px">
<div class="c ind" style="left:0px;width:42px"></div>
<div class="c gc odd" style="left:42px;width:100px">2025. 09. 17.</div>
<div class="c odd r" style="left:142px;width:100px">2121</div>
<div class="c odd r" style="left:242px;width:100px">500,00</div>
<div class="c odd r" style="left:342px;width:100px">0,00</div>
<div class="c odd r" style="left:442px;width:100px">194 915,00</div>
<div class="c odd r" style="left:542px;width:100px">0,00</div>
<div class="c odd r" style="left:642px;width:100px">4 837,84</div>
<div class="c odd r" style="left:742px;width:100px">1 885 130,21</div>
<div class="c odd" style="left:842px;width:100px">390,000000000000000</div>
<div class="c odd" style="left:942px;width:100px"></div>
<div class="c odd" style="left:1042px;width:48px">euro</div>
<div class="c odd r" style="left:1090px;width:50px">6</div>
<div class="c odd" style="left:1140px;width:100px">389,83</div>
<svg class="ico" style="left:986px;top:3px" width="9" height="11" viewBox="0 0 9 11"><path d="M0.5 0.5 H6 L8.5 3 V10.5 H0.5 Z" fill="#fff" stroke="#4a68a8"/><path d="M2.5 6 L4.5 8.5 L8.5 3.5" stroke="#1a5fd8" stroke-width="2" fill="none"/></svg>
</div>
<div class="row" style="top:346px;width:1240px">
<div class="c ind" style="left:0px;width:42px"></div>
<div class="c gc even" style="left:42px;width:100px">2025. 09. 17.</div>
<div class="c even r" style="left:142px;width:100px">2122</div>
<div class="c even r" style="left:242px;width:100px">0,00</div>
<div class="c even r" style="left:342px;width:100px">500,00</div>
<div class="c even r" style="left:442px;width:100px">0,00</div>
<div class="c even r" style="left:542px;width:100px">194 830,00</div>
<div class="c even r" style="left:642px;width:100px">4 337,84</div>
<div class="c even r" style="left:742px;width:100px">1 690 300,21</div>
<div class="c even" style="left:842px;width:100px">390,000000000000000</div>
<div class="c even" style="left:942px;width:100px"></div>
<div class="c even" style="left:1042px;width:48px">euro</div>
<div class="c even r" style="left:1090px;width:50px">6</div>
<div class="c even" style="left:1140px;width:100px">389,66</div>
</div>
<div class="row" style="top:363px;width:1240px">
<div class="c ind" style="left:0px;width:42px"></div>
<div class="c gc odd" style="left:42px;width:100px">2025. 09. 17.</div>
<div class="c odd r" style="left:142px;width:100px">2123</div>
<div class="c odd r" style="left:242px;width:100px">1 200,00</div>
<div class="c odd r" style="left:342px;width:100px">0,00</div>
<div class="c odd r" style="left:442px;width:100px">467 796,00</div>
<div class="c odd r" style="left:542px;width:100px">0,00</div>
<div class="c odd r" style="left:642px;width:100px">5 537,84</div>
<div class="c odd r" style="left:742px;width:100px">2 158 096,21</div>
<div class="c odd" style="left:842px;width:100px">390,000000000000000</div>
<div class="c odd" style="left:942px;width:100px"></div>
<div class="c odd" style="left:1042px;width:48px">euro</div>
<div class="c odd r" style="left:1090px;width:50px">6</div>
<div class="c odd" style="left:1140px;width:100px">389,83</div>
<svg class="ico" style="left:986px;top:3px" width="9" height="11" viewBox="0 0 9 11"><path d="M0.5 0.5 H6 L8.5 3 V10.5 H0.5 Z" fill="#fff" stroke="#4a68a8"/><path d="M2.5 6 L4.5 8.5 L8.5 3.5" stroke="#1a5fd8" stroke-width="2" fill="none"/></svg>
</div>
<div class="row" style="top:380px;width:1240px">
<div class="c ind" style="left:0px;width:42px"></div>
<div class="c gc even" style="left:42px;width:100px">2025. 09. 17.</div>
<div class="c even r" style="left:142px;width:100px">2123</div>
<div class="c even r" style="left:242px;width:100px">1 200,00</div>
<div class="c even r" style="left:342px;width:100px">0,00</div>
<div class="c even r" style="left:442px;width:100px">467 796,00</div>
<div class="c even r" style="left:542px;width:100px">0,00</div>
<div class="c even r" style="left:642px;width:100px">6 737,84</div>
<div class="c even r" style="left:742px;width:100px">2 625 892,21</div>
<div class="c even" style="left:842px;width:100px">390,000000000000000</div>
<div class="c even" style="left:942px;width:100px"></div>
<div class="c even" style="left:1042px;width:48px">euro</div>
<div class="c even r" style="left:1090px;width:50px">6</div>
<div class="c even" style="left:1140px;width:100px">389,83</div>
<svg class="ico" style="left:986px;top:3px" width="9" height="11" viewBox="0 0 9 11"><path d="M0.5 0.5 H6 L8.5 3 V10.5 H0.5 Z" fill="#fff" stroke="#4a68a8"/><path d="M2.5 6 L4.5 8.5 L8.5 3.5" stroke="#1a5fd8" stroke-width="2" fill="none"/></svg>
</div>
<div class="row" style="top:397px;width:1240px">
<div class="c ind" style="left:0px;width:42px"></div>
<div class="c gc odd" style="left:42px;width:100px">2025. 09. 17.</div>
<div class="c odd r" style="left:142px;width:100px">2124</div>
<div class="c odd r" style="left:242px;width:100px">0,00</div>
<div class="c odd r" style="left:342px;width:100px">200,00</div>
<div class="c odd r" style="left:442px;width:100px">0,00</div>
<div class="c odd r" style="left:542px;width:100px">77 944,00</div>
<div class="c odd r" style="left:642px;width:100px">6 537,84</div>
<div class="c odd r" style="left:742px;width:100px">2 547 948,21</div>
<div class="c odd" style="left:842px;width:100px">390,000000000000000</div>
<div class="c odd" style="left:942px;width:100px"></div>
<div class="c odd" style="left:1042px;width:48px">euro</div>
<div class="c odd r" style="left:1090px;width:50px">6</div>
<div class="c odd" style="left:1140px;width:100px">389,72</div>
</div>
<div class="row" style="top:414px;width:1240px">
<div class="c ind" style="left:0px;width:42px"></div>
<div class="c gc even" style="left:42px;width:100px">2025. 09. 17.</div>
<div class="c even r" style="left:142px;width:100px">2074</div>
<div class="c even r" style="left:242px;width:100px">100,00</div>
<div class="c even r" style="left:342px;width:100px">0,00</div>
<div class="c even r" style="left:442px;width:100px">38 983,00</div>
<div class="c even r" style="left:542px;width:100px">0,00</div>
<div class="c even r" style="left:642px;width:100px">6 637,84</div>
<div class="c even r" style="left:742px;width:100px">2 586 931,21</div>
<div class="c even" style="left:842px;width:100px">395,370000000000000</div>
<div class="c even" style="left:942px;width:100px"></div>
<div class="c even" style="left:1042px;width:48px">euro</div>
<div class="c even r" style="left:1090px;width:50px">6</div>
<div class="c even" style="left:1140px;width:100px">389,83</div>
<svg class="ico" style="left:986px;top:3px" width="9" height="11" viewBox="0 0 9 11"><path d="M0.5 0.5 H6 L8.5 3 V10.5 H0.5 Z" fill="#fff" stroke="#4a68a8"/><path d="M2.5 6 L4.5 8.5 L8.5 3.5" stroke="#1a5fd8" stroke-width="2" fill="none"/></svg>
</div>
<div class="row" style="top:431px;width:1240px">
<div class="c ind" style="left:0px;width:42px"></div>
<div class="c gc odd" style="left:42px;width:100px">2025. 09. 17.</div>
<div class="c odd r" style="left:142px;width:100px">2075</div>
<div class="c odd r" style="left:242px;width:100px">0,00</div>
<div class="c odd r" style="left:342px;width:100px">1 200,00</div>
<div class="c odd r" style="left:442px;width:100px">0,00</div>
<div class="c odd r" style="left:542px;width:100px">467 664,00</div>
<div class="c odd r" style="left:642px;width:100px">5 437,84</div>
<div class="c odd r" style="left:742px;width:100px">2 119 267,21</div>
<div class="c odd" style="left:842px;width:100px">395,370000000000000</div>
<div class="c odd" style="left:942px;width:100px"></div>
<div class="c odd" style="left:1042px;width:48px">euro</div>
<div class="c odd r" style="left:1090px;width:50px">6</div>
<div class="c odd" style="left:1140px;width:100px">389,72</div>
</div>
<div class="row" style="top:448px;width:1240px">
<div class="c ind" style="left:0px;width:42px"></div>
<div class="c gc even" style="left:42px;width:100px">2025. 09. 17.</div>
<div class="c even r" style="left:142px;width:100px">2075</div>
<div class="c even r" style="left:242px;width:100px">0,00</div>
<div class="c even r" style="left:342px;width:100px">1 200,00</div>
<div class="c even r" style="left:442px;width:100px">0,00</div>
<div class="c even r" style="left:542px;width:100px">467 664,00</div>
<div class="c even r" style="left:642px;width:100px">4 237,84</div>
<div class="c even r" style="left:742px;width:100px">1 651 603,21</div>
<div class="c even" style="left:842px;width:100px">395,370000000000000</div>
<div class="c even" style="left:942px;width:100px"></div>
<div class="c even" style="left:1042px;width:48px">euro</div>
<div class="c even r" style="left:1090px;width:50px">6</div>
<div class="c even" style="left:1140px;width:100px">389,72</div>
</div>
<div class="row" style="top:465px;width:1240px">
<div class="c ind" style="left:0px;width:42px"></div>
<div class="c gc odd" style="left:42px;width:100px">2025. 09. 17.</div>
<div class="c odd r" style="left:142px;width:100px">2077</div>
<div class="c odd r" style="left:242px;width:100px">200,00</div>
<div class="c odd r" style="left:342px;width:100px">0,00</div>
<div class="c odd r" style="left:442px;width:100px">77 966,00</div>
<div class="c odd r" style="left:542px;width:100px">0,00</div>
<div class="c odd r" style="left:642px;width:100px">4 437,84</div>
<div class="c odd r" style="left:742px;width:100px">1 729 569,21</div>
<div class="c odd" style="left:842px;width:100px">395,370000000000000</div>
<div class="c odd" style="left:942px;width:100px"></div>
<div class="c odd" style="left:1042px;width:48px">euro</div>
<div class="c odd r" style="left:1090px;width:50px">6</div>
<div class="c odd" style="left:1140px;width:100px">389,83</div>
<svg class="ico" style="left:986px;top:3px" width="9" height="11" viewBox="0 0 9 11"><path d="M0.5 0.5 H6 L8.5 3 V10.5 H0.5 Z" fill="#fff" stroke="#4a68a8"/><path d="M2.5 6 L4.5 8.5 L8.5 3.5" stroke="#1a5fd8" stroke-width="2" fill="none"/></svg>
</div>
<div class="row" style="top:482px;width:1240px">
<div class="c ind" style="left:0px;width:42px"></div>
<div class="c gc even" style="left:42px;width:100px">2025. 09. 17.</div>
<div class="c even r" style="left:142px;width:100px">2078</div>
<div class="c even r" style="left:242px;width:100px">800,00</div>
<div class="c even r" style="left:342px;width:100px">0,00</div>
<div class="c even r" style="left:442px;width:100px">311 864,00</div>
<div class="c even r" style="left:542px;width:100px">0,00</div>
<div class="c even r" style="left:642px;width:100px">5 237,84</div>
<div class="c even r" style="left:742px;width:100px">2 041 433,21</div>
<div class="c even" style="left:842px;width:100px">395,370000000000000</div>
<div class="c even" style="left:942px;width:100px"></div>
<div class="c even" style="left:1042px;width:48px">euro</div>
<div class="c even r" style="left:1090px;width:50px">6</div>
<div class="c even" style="left:1140px;width:100px">389,83</div>
<svg class="ico" style="left:986px;top:3px" width="9" height="11" viewBox="0 0 9 11"><path d="M0.5 0.5 H6 L8.5 3 V10.5 H0.5 Z" fill="#fff" stroke="#4a68a8"/><path d="M2.5 6 L4.5 8.5 L8.5 3.5" stroke="#1a5fd8" stroke-width="2" fill="none"/></svg>
</div>
<div class="row" style="top:499px;width:1240px">
<div class="c ind" style="left:0px;width:42px"></div>
<div class="c gc odd" style="left:42px;width:100px">2025. 09. 17.</div>
<div class="c odd r" style="left:142px;width:100px">2079</div>
<div class="c odd r" style="left:242px;width:100px">200,00</div>
<div class="c odd r" style="left:342px;width:100px">0,00</div>
<div class="c odd r" style="left:442px;width:100px">77 966,00</div>
<div class="c odd r" style="left:542px;width:100px">0,00</div>
<div class="c odd r" style="left:642px;width:100px">5 437,84</div>
<div class="c odd r" style="left:742px;width:100px">2 119 399,21</div>
<div class="c odd" style="left:842px;width:100px">395,370000000000000</div>
<div class="c odd" style="left:942px;width:100px"></div>
<div class="c odd" style="left:1042px;width:48px">euro</div>
<div class="c odd r" style="left:1090px;width:50px">6</div>
<div class="c odd" style="left:1140px;width:100px">389,83</div>
<svg class="ico" style="left:986px;top:3px" width="9" height="11" viewBox="0 0 9 11"><path d="M0.5 0.5 H6 L8.5 3 V10.5 H0.5 Z" fill="#fff" stroke="#4a68a8"/><path d="M2.5 6 L4.5 8.5 L8.5 3.5" stroke="#1a5fd8" stroke-width="2" fill="none"/></svg>
</div>
<div class="row" style="top:516px;width:1240px">
<div class="c ind" style="left:0px;width:42px"></div>
<div class="c gc even" style="left:42px;width:100px">2025. 09. 17.</div>
<div class="c even r" style="left:142px;width:100px">2082</div>
<div class="c even r" style="left:242px;width:100px">0,00</div>
<div class="c even r" style="left:342px;width:100px">100,00</div>
<div class="c even r" style="left:442px;width:100px">0,00</div>
<div class="c even r" style="left:542px;width:100px">38 975,00</div>
<div class="c even r" style="left:642px;width:100px">5 337,84</div>
<div class="c even r" style="left:742px;width:100px">2 080 424,21</div>
<div class="c even" style="left:842px;width:100px">390,000000000000000</div>
<div class="c even" style="left:942px;width:100px"></div>
<div class="c even" style="left:1042px;width:48px">euro</div>
<div class="c even r" style="left:1090px;width:50px">6</div>
<div class="c even" style="left:1140px;width:100px">389,75</div>
</div>
<div class="row" style="top:533px;width:1240px">
<div class="c ind" style="left:0px;width:42px"></div>
<div class="c gc odd" style="left:42px;width:100px">2025. 09. 17.</div>
<div class="c odd r" style="left:142px;width:100px">2083</div>
<div class="c odd r" style="left:242px;width:100px">1 200,00</div>
<div class="c odd r" style="left:342px;width:100px">0,00</div>
<div class="c odd r" style="left:442px;width:100px">467 796,00</div>
<div class="c odd r" style="left:542px;width:100px">0,00</div>
<div class="c odd r" style="left:642px;width:100px">6 537,84</div>
<div class="c odd r" style="left:742px;width:100px">2 548 220,21</div>
<div class="c odd" style="left:842px;width:100px">390,000000000000000</div>
<div class="c odd" style="left:942px;width:100px"></div>
<div class="c odd" style="left:1042px;width:48px">euro</div>
<div class="c odd r" style="left:1090px;width:50px">6</div>
<div class="c odd" style="left:1140px;width:100px">389,83</div>
<svg class="ico" style="left:986px;top:3px" width="9" height="11" viewBox="0 0 9 11"><path d="M0.5 0.5 H6 L8.5 3 V10.5 H0.5 Z" fill="#fff" stroke="#4a68a8"/><path d="M2.5 6 L4.5 8.5 L8.5 3.5" stroke="#1a5fd8" stroke-width="2" fill="none"/></svg>
</div>
<div class="row" style="top:550px;width:1240px">
<div class="c ind" style="left:0px;width:42px"></div>
<div class="c gc even" style="left:42px;width:100px">2025. 09. 17.</div>
<div class="c even r" style="left:142px;width:100px">2083</div>
<div class="c even r" style="left:242px;width:100px">1 200,00</div>
<div class="c even r" style="left:342px;width:100px">0,00</div>
<div class="c even r" style="left:442px;width:100px">467 796,00</div>
<div class="c even r" style="left:542px;width:100px">0,00</div>
<div class="c even r" style="left:642px;width:100px">7 737,84</div>
<div class="c even r" style="left:742px;width:100px">3 016 016,21</div>
<div class="c even" style="left:842px;width:100px">390,000000000000000</div>
<div class="c even" style="left:942px;width:100px"></div>
<div class="c even" style="left:1042px;width:48px">euro</div>
<div class="c even r" style="left:1090px;width:50px">6</div>
<div class="c even" style="left:1140px;width:100px">389,83</div>
<svg class="ico" style="left:986px;top:3px" width="9" height="11" viewBox="0 0 9 11"><path d="M0.5 0.5 H6 L8.5 3 V10.5 H0.5 Z" fill="#fff" stroke="#4a68a8"/><path d="M2.5 6 L4.5 8.5 L8.5 3.5" stroke="#1a5fd8" stroke-width="2" fill="none"/></svg>
</div>
<div class="row" style="top:567px;width:1240px">
<div class="c ind" style="left:0px;width:42px"></div>
<div class="c gc odd" style="left:42px;width:100px">2025. 09. 17.</div>
<div class="c odd r" style="left:142px;width:100px">2085</div>
<div class="c odd r" style="left:242px;width:100px">0,00</div>
<div class="c odd r" style="left:342px;width:100px">1 200,00</div>
<div class="c odd r" style="left:442px;width:100px">0,00</div>
<div class="c odd r" style="left:542px;width:100px">467 724,00</div>
<div class="c odd r" style="left:642px;width:100px">6 537,84</div>
<div class="c odd r" style="left:742px;width:100px">2 548 292,21</div>
<div class="c odd" style="left:842px;width:100px">390,000000000000000</div>
<div class="c odd" style="left:942px;width:100px"></div>
<div class="c odd" style="left:1042px;width:48px">euro</div>
<div class="c odd r" style="left:1090px;width:50px">6</div>
<div class="c odd" style="left:1140px;width:100px">389,77</div>
</div>
<div class="row" style="top:584px;width:1240px">
<div class="c ind" style="left:0px;width:42px"></div>
<div class="c gc even" style="left:42px;width:100px">2025. 09. 17.</div>
<div class="c even r" style="left:142px;width:100px">2085</div>
<div class="c even r" style="left:242px;width:100px">0,00</div>
<div class="c even r" style="left:342px;width:100px">1 200,00</div>
<div class="c even r" style="left:442px;width:100px">0,00</div>
<div class="c even r" style="left:542px;width:100px">467 724,00</div>
<div class="c even r" style="left:642px;width:100px">5 337,84</div>
<div class="c even r" style="left:742px;width:100px">2 080 568,21</div>
<div class="c even" style="left:842px;width:100px">390,000000000000000</div>
<div class="c even" style="left:942px;width:100px"></div>
<div class="c even" style="left:1042px;width:48px">euro</div>
<div class="c even r" style="left:1090px;width:50px">6</div>
<div class="c even" style="left:1140px;width:100px">389,77</div>
</div>
<div class="row" style="top:601px;width:1240px">
<div class="c ind" style="left:0px;width:42px"></div>
<div class="c gc odd" style="left:42px;width:100px">2025. 09. 17.</div>
<div class="c odd r" style="left:142px;width:100px">2088</div>
<div class="c odd r" style="left:242px;width:100px">0,00</div>
<div class="c odd r" style="left:342px;width:100px">0,00</div>
<div class="c odd r" style="left:442px;width:100px">0,00</div>
<div class="c odd r" style="left:542px;width:100px">0,00</div>
<div class="c odd r" style="left:642px;width:100px">5 337,84</div>
<div class="c odd r" style="left:742px;width:100px">2 080 568,21</div>
<div class="c odd" style="left:842px;width:100px">363,590000000000000</div>
<div class="c odd" style="left:942px;width:100px"></div>
<div class="c odd" style="left:1042px;width:48px">euro</div>
<div class="c odd r" style="left:1090px;width:50px">6</div>
<div class="c odd" style="left:1140px;width:100px">389,83</div>
<svg class="ico" style="left:986px;top:3px" width="9" height="11" viewBox="0 0 9 11"><path d="M0.5 0.5 H6 L8.5 3 V10.5 H0.5 Z" fill="#fff" stroke="#4a68a8"/><path d="M2.5 6 L4.5 8.5 L8.5 3.5" stroke="#1a5fd8" stroke-width="2" fill="none"/></svg>
</div>
<svg class="ico" style="left:3px;top:28px" width="5" height="7" viewBox="0 0 5 7"><path d="M0 0 L4 3.5 L0 7Z" fill="#5a8ae8"/></svg>
</div>
<div class="a" style="left:699px;top:815px;width:1233px;height:36px;background:linear-gradient(#d0d0d0,#bdbdbd 35%,#cfcfcf 75%,#dcdcdc);border-top:1px solid #8a8a8a"></div>
<div class="a" style="left:713px;top:821px;width:22px;height:23px;border:1px solid #a8a8a8;background:#dcdcdc"></div>
<svg class="ico" style="left:718px;top:825px" width="12" height="15" viewBox="0 0 12 16"><defs><linearGradient id="fg" x1="0" y1="0" x2="1" y2="1"><stop offset="0" stop-color="#cfe6fb"/><stop offset="1" stop-color="#7eb6ea"/></linearGradient></defs><rect x="0.5" y="0.5" width="11" height="15" fill="url(#fg)" stroke="#3f86d0"/><rect x="2" y="2" width="8" height="1.5" fill="#f5a030"/><rect x="2" y="4" width="8" height="3.5" fill="#e8f4ff"/><circle cx="8" cy="5.5" r="1.3" fill="#6a9ad8"/><path d="M2 9.5 H6 M2 11.5 H6 M2 13.5 H6 M4 9 V14" stroke="#e8f4ff" stroke-width="0.9"/><rect x="8" y="11.5" width="2" height="2.5" fill="#f5a030"/></svg>
<div class="a" style="left:1788px;top:821px;width:85px;height:24px;border:2px solid #1a6ed8;background:linear-gradient(#e8e8e8,#d8d8d8)"></div>
<svg class="ico" style="left:1800px;top:825px" width="16" height="14" viewBox="0 0 16 14"><path d="M1 7 L6 12 L15 2" stroke="#3aa830" stroke-width="3.2" fill="none"/></svg>
<div class="t" style="left:1819px;top:827px;font-size:12px;color:#666">OK</div>
<div class="a" style="left:318px;top:11px;width:361px;height:153px;background:#f4f4f4;border:1px solid #6a6a6a;border-right:1px dotted #444"></div>
<div class="a" style="left:319px;top:12px;width:358px;height:30px;background:#fff"></div>
<svg class="ico" style="left:327px;top:18px" width="16" height="16" viewBox="0 0 16 16"><defs><linearGradient id="ig327" x1="0" y1="0" x2="0" y2="1"><stop offset="0" stop-color="#6ab8f0"/><stop offset="0.55" stop-color="#1a7ad0"/><stop offset="1" stop-color="#0a5ab0"/></linearGradient></defs><rect x="0" y="0" width="16" height="16" rx="2.5" fill="url(#ig327)"/><path d="M2.2 5 V10.5 M4.5 10.5 V7 Q6 6 7 7.5 V10.5 M7 7.5 Q8.5 6 9.5 7.5 V10.5 M14 7.2 Q12 6 11 8 Q11 10.5 13 10.3 M2 11.5 Q8 12.5 15 10.5" stroke="#fff" stroke-width="1.1" fill="none"/></svg>
<div class="t" style="left:348px;top:21px;font-size:12px">Árfolyam rekalkuláció éve</div>
<svg class="ico" style="left:656px;top:19px" width="14" height="14" viewBox="0 0 14 14"><path d="M1.5 1.5 L12.5 12.5 M12.5 1.5 L1.5 12.5" stroke="#000" stroke-width="1.1"/></svg>
<div class="lbl" style="left:365px;top:68px;color:#8a8a8a">Dátumtól</div>
<div class="a" style="left:363px;top:84px;width:80px;height:21px;background:#fff;border:1px solid #7a7a7a;border-bottom:none"><div class="t" style="left:2px;top:4px;font-size:12.7px">2025. 09. 01.</div></div>
<svg class="ico" style="left:446px;top:86px" width="16" height="16" viewBox="0 0 16 16"><rect x="1.5" y="2.5" width="14" height="13" rx="2" fill="#666" opacity="0.75"/><rect x="0.5" y="2" width="13.5" height="12.5" rx="1.5" fill="#f2f2ff" stroke="#8c8cd0"/><path d="M2 1.5 H13" stroke="#444" stroke-width="2" stroke-dasharray="1 1"/><path d="M3 5.5 L4.5 4.5 V9" stroke="#ff7010" stroke-width="1.5" fill="none"/><path d="M6.3 5 Q8 3.3 9.2 5 L7 8 H9.8" stroke="#ff3010" stroke-width="1.3" fill="none"/><path d="M7.5 10 L9.8 13.5 L14 6.5" stroke="#0a5ad8" stroke-width="2.4" fill="none"/></svg>
<div class="lbl" style="left:522px;top:68px;color:#8a8a8a">Dátumig</div>
<div class="a" style="left:520px;top:84px;width:80px;height:21px;background:#fff;border:1px solid #7a7a7a;border-bottom:none"><div class="t" style="left:2px;top:4px;font-size:12.7px">2025. 11. 26.</div></div>
<svg class="ico" style="left:603px;top:86px" width="16" height="16" viewBox="0 0 16 16"><rect x="1.5" y="2.5" width="14" height="13" rx="2" fill="#666" opacity="0.75"/><rect x="0.5" y="2" width="13.5" height="12.5" rx="1.5" fill="#f2f2ff" stroke="#8c8cd0"/><path d="M2 1.5 H13" stroke="#444" stroke-width="2" stroke-dasharray="1 1"/><path d="M3 5.5 L4.5 4.5 V9" stroke="#ff7010" stroke-width="1.5" fill="none"/><path d="M6.3 5 Q8 3.3 9.2 5 L7 8 H9.8" stroke="#ff3010" stroke-width="1.3" fill="none"/><path d="M7.5 10 L9.8 13.5 L14 6.5" stroke="#0a5ad8" stroke-width="2.4" fill="none"/></svg>
<div class="a" style="left:319px;top:128px;width:359px;height:36px;background:linear-gradient(#d2d2d2,#bdbdbd 35%,#d0d0d0 75%,#dcdcdc);border-top:1px solid #858585"></div>
<div class="a" style="left:332px;top:134px;width:22px;height:24px;border:1px solid #a8a8a8;background:#dcdcdc"></div>
<svg class="ico" style="left:337px;top:138px" width="12" height="15" viewBox="0 0 12 16"><defs><linearGradient id="fg" x1="0" y1="0" x2="1" y2="1"><stop offset="0" stop-color="#cfe6fb"/><stop offset="1" stop-color="#7eb6ea"/></linearGradient></defs><rect x="0.5" y="0.5" width="11" height="15" fill="url(#fg)" stroke="#3f86d0"/><rect x="2" y="2" width="8" height="1.5" fill="#f5a030"/><rect x="2" y="4" width="8" height="3.5" fill="#e8f4ff"/><circle cx="8" cy="5.5" r="1.3" fill="#6a9ad8"/><path d="M2 9.5 H6 M2 11.5 H6 M2 13.5 H6 M4 9 V14" stroke="#e8f4ff" stroke-width="0.9"/><rect x="8" y="11.5" width="2" height="2.5" fill="#f5a030"/></svg>
<div class="a" style="left:482px;top:134px;width:85px;height:24px;border:2px solid #1a6ed8;background:#dedede"><div class="a" style="left:1px;top:1px;right:1px;bottom:1px;border:1px dotted #000"></div></div>
<svg class="ico" style="left:495px;top:138px" width="16" height="14" viewBox="0 0 16 14"><path d="M1 7 L6 12 L15 2" stroke="#3aa830" stroke-width="3.2" fill="none"/></svg>
<div class="t" style="left:514px;top:140px;font-size:12px;color:#666">OK</div>
<div class="a" style="left:575px;top:134px;width:99px;height:24px;border:1px solid #adadad;background:#dedede"></div>
<svg class="ico" style="left:585px;top:137px" width="16" height="16" viewBox="0 0 16 16"><path d="M2 2 L14 14 M14 2 L2 14" stroke="#e8401a" stroke-width="3.6"/></svg>
<div class="t" style="left:605px;top:140px;font-size:12px;color:#666">Mégse</div>
<div class="a" style="left:698px;top:83px;width:144px;height:39px;border:3px solid #21b04b"></div>
<div class="a" style="left:843px;top:84px;width:139px;height:40px;border:3px solid #21b04b"></div>
<div class="a" style="left:676px;top:101px;width:23px;height:3px;background:#21b04b"></div>
<div class="a" style="left:899px;top:123px;width:3px;height:15px;background:#21b04b"></div>
</body></html>
